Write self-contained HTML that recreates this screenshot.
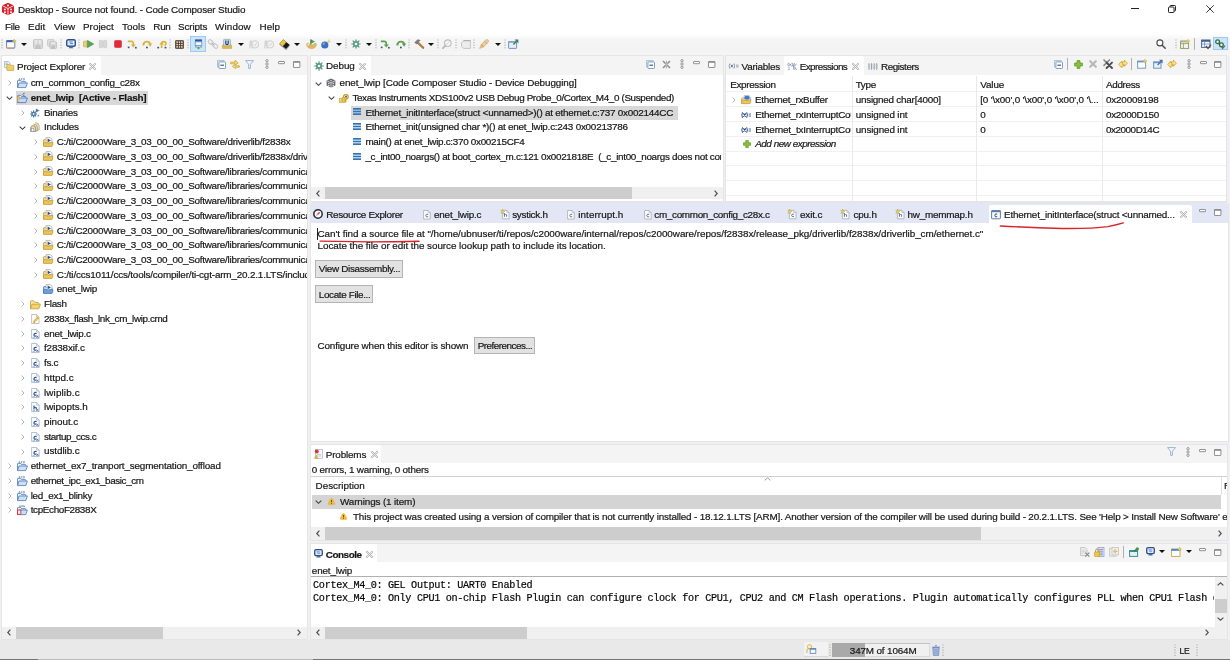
<!DOCTYPE html>
<html lang="en"><head><meta charset="utf-8"><title>Desktop - Source not found. - Code Composer Studio</title>
<style>
html,body{margin:0;padding:0}
body{width:1230px;height:660px;position:relative;overflow:hidden;background:#f3f3f3;
font-family:"Liberation Sans",sans-serif;font-size:9.9px;color:#151515;-webkit-text-stroke:0.2px #151515}
.b{position:absolute}
.i{position:absolute;overflow:visible}
.tl{position:absolute;left:0;top:0;width:1230px;height:660px;will-change:transform}
.t{position:absolute;white-space:pre;line-height:12px;height:12px}
</style></head>
<body>
<div class="b" style="left:0px;top:0px;width:1230px;height:19.5px;background:#fff;"></div>
<div class="b" style="left:0px;top:19.5px;width:1230px;height:15px;background:#fff;"></div>
<div class="b" style="left:0px;top:33.5px;width:1230px;height:21px;background:linear-gradient(#fff,#f5f5f5 25%,#f3f3f3 70%,#f6f6f6);"></div>
<div class="b" style="left:0px;top:53.5px;width:1230px;height:586px;background:#f0f0f3;"></div>
<div class="b" style="left:0px;top:53.5px;width:1230px;height:2px;background:#f5f5f5;"></div>
<div class="b" style="left:0px;top:639.5px;width:1230px;height:20.5px;background:#e9e9e9;"></div>
<div class="b" style="left:190px;top:36px;width:16px;height:16px;background:#cce4f7;box-shadow:inset 0 0 0 1px #9ccaf0"></div>
<div class="b" style="left:1213.4px;top:36.6px;width:14.2px;height:13.6px;background:#cce4f7;box-shadow:inset 0 0 0 1px #9ccaf0"></div>
<div class="b" style="left:2px;top:56px;width:304.5px;height:583px;background:#fff;box-shadow:0 0 0 1px #e5e5e5"></div>
<div class="b" style="left:2px;top:56px;width:304.5px;height:18.5px;background:#f4f4f4;"></div>
<div class="b" style="left:2px;top:56px;width:99px;height:19px;background:#fff;border-radius:2px 2px 0 0"></div>
<div class="b" style="left:16.4px;top:90.63px;width:131.2px;height:14.1px;background:#d8d8d8;"></div>
<div class="b" style="left:2px;top:626.7px;width:304.5px;height:12.3px;background:#f0f0f0;"></div>
<div class="b" style="left:16px;top:626.7px;width:146.6px;height:12.3px;background:#cdcdcd;"></div>
<div class="b" style="left:310.5px;top:56px;width:412.5px;height:144.7px;background:#fff;box-shadow:0 0 0 1px #e5e5e5"></div>
<div class="b" style="left:310.5px;top:56px;width:412.5px;height:18.5px;background:#f4f4f4;"></div>
<div class="b" style="left:310.5px;top:56px;width:60px;height:19px;background:#fff;border-radius:2px 2px 0 0"></div>
<div class="b" style="left:350.7px;top:105.56px;width:327px;height:14px;background:#d8d8d8;"></div>
<div class="b" style="left:310.5px;top:187px;width:412.5px;height:12.2px;background:#f0f0f0;"></div>
<div class="b" style="left:325px;top:187px;width:306.5px;height:12.2px;background:#cdcdcd;"></div>
<div class="b" style="left:726px;top:56px;width:500px;height:144.7px;background:#fff;box-shadow:0 0 0 1px #e5e5e5"></div>
<div class="b" style="left:726px;top:56px;width:500px;height:18.5px;background:#f4f4f4;"></div>
<div class="b" style="left:726px;top:56px;width:0px;height:19px;background:#fff;border-radius:2px 2px 0 0"></div>
<div class="b" style="left:783.6px;top:56px;width:80px;height:19px;background:#fff;border-radius:2px 2px 0 0"></div>
<div class="b" style="left:726px;top:91.2px;width:500px;height:1px;background:#f0f0f0;"></div>
<div class="b" style="left:726px;top:106.2px;width:500px;height:1px;background:#f0f0f0;"></div>
<div class="b" style="left:726px;top:121px;width:500px;height:1px;background:#f0f0f0;"></div>
<div class="b" style="left:726px;top:136px;width:500px;height:1px;background:#f0f0f0;"></div>
<div class="b" style="left:726px;top:150.8px;width:500px;height:1px;background:#f0f0f0;"></div>
<div class="b" style="left:726px;top:165.4px;width:500px;height:1px;background:#f0f0f0;"></div>
<div class="b" style="left:726px;top:180.2px;width:500px;height:1px;background:#f0f0f0;"></div>
<div class="b" style="left:726px;top:194.6px;width:500px;height:1px;background:#f0f0f0;"></div>
<div class="b" style="left:851.5px;top:75.5px;width:1px;height:125px;background:#e9e9e9;"></div>
<div class="b" style="left:976.4px;top:75.5px;width:1px;height:125px;background:#e9e9e9;"></div>
<div class="b" style="left:1101.7px;top:75.5px;width:1px;height:125px;background:#e9e9e9;"></div>
<div class="b" style="left:310.5px;top:203.4px;width:917.5px;height:237.4px;background:#fff;box-shadow:0 0 0 1px #e5e5e5;border-radius:3px 3px 0 0"></div>
<div class="b" style="left:310.5px;top:203.4px;width:917.5px;height:19.2px;background:#e2e6f5;border-radius:3px 3px 0 0"></div>
<div class="b" style="left:988.6px;top:204.6px;width:203.6px;height:18.3px;background:#fff;border-radius:2px 2px 0 0"></div>
<div class="b" style="left:317px;top:228px;width:1px;height:11.5px;background:#222;"></div>
<div class="b" style="left:315.1px;top:259.5px;width:88px;height:18px;background:#e2e2e2;box-shadow:inset 0 0 0 1px #b4b4b4"></div>
<div class="b" style="left:315.1px;top:285px;width:58px;height:17.8px;background:#e2e2e2;box-shadow:inset 0 0 0 1px #b4b4b4"></div>
<div class="b" style="left:474px;top:336.5px;width:60.7px;height:17.4px;background:#e2e2e2;box-shadow:inset 0 0 0 1px #b4b4b4"></div>
<div class="b" style="left:310.5px;top:444.5px;width:916.5px;height:95.5px;background:#fff;box-shadow:0 0 0 1px #e5e5e5"></div>
<div class="b" style="left:310.5px;top:444.5px;width:916.5px;height:18px;background:#f4f4f4;"></div>
<div class="b" style="left:310.5px;top:444.5px;width:70px;height:18.5px;background:#fff;border-radius:2px 2px 0 0"></div>
<div class="b" style="left:310.5px;top:476.3px;width:916.5px;height:1px;background:#d0d0d0;"></div>
<div class="b" style="left:1220.5px;top:477px;width:1px;height:17.5px;background:#e0e0e0;"></div>
<div class="b" style="left:312px;top:494.5px;width:908.5px;height:14px;background:#d4d4d4;"></div>
<div class="b" style="left:310.5px;top:526.5px;width:916.5px;height:13px;background:#f0f0f0;"></div>
<div class="b" style="left:325px;top:526.5px;width:655.5px;height:13px;background:#cdcdcd;"></div>
<div class="b" style="left:310.5px;top:544.3px;width:916.5px;height:94.7px;background:#fff;box-shadow:0 0 0 1px #e5e5e5"></div>
<div class="b" style="left:310.5px;top:544.3px;width:916.5px;height:18.1px;background:#f4f4f4;"></div>
<div class="b" style="left:310.5px;top:544.3px;width:66.7px;height:18.6px;background:#fff;border-radius:2px 2px 0 0"></div>
<div class="b" style="left:310.5px;top:575.7px;width:916.5px;height:1px;background:#b0b0b0;"></div>
<div class="b" style="left:1214.5px;top:577px;width:12.5px;height:49.7px;background:#f0f0f0;"></div>
<div class="b" style="left:1214.5px;top:599.4px;width:12.5px;height:13.2px;background:#cdcdcd;"></div>
<div class="b" style="left:310.5px;top:626.7px;width:904px;height:12.3px;background:#f0f0f0;"></div>
<div class="b" style="left:325px;top:626.7px;width:202.3px;height:12.3px;background:#cdcdcd;"></div>
<div class="b" style="left:1214.5px;top:626.7px;width:12.5px;height:12.3px;background:#f0f0f0;"></div>
<div class="b" style="left:803.5px;top:641.5px;width:24.5px;height:14.6px;background:#f2f2f2;box-shadow:0 1px 0 #d9d9d9"></div>
<div class="b" style="left:832px;top:642.6px;width:98.2px;height:14.2px;background:#f0f0f0;box-shadow:inset 0 1px 0 #c4c4c4, inset 0 0 0 1px #dadada"></div>
<div class="b" style="left:832px;top:642.6px;width:33.2px;height:14.2px;background:#a9a9a9;"></div>
<div class="b" style="left:0px;top:658.7px;width:1230px;height:1.3px;background:#bdbdbd;"></div>
<div class="b" style="left:0px;top:658.7px;width:38px;height:1.3px;background:#757575;"></div>
<div class="b" style="left:313px;top:658.7px;width:917px;height:1.3px;background:#757575;"></div>
<svg class="i" style="left:0.72px;top:2.02px" width="13.95" height="13.95" viewBox="0 0 15 15"><path d="M7.5 0.8 L14 3.8 V11 L7.5 14.2 L1 11 V3.8 Z" fill="#d8202a"/><path d="M1 3.8 L7.5 7 L14 3.8 M7.5 7 V14.2" stroke="#fff" stroke-width="0.9" fill="none"/><circle cx="4.2" cy="8" r="1" fill="#fff"/><circle cx="4.2" cy="11" r="1" fill="#fff"/><circle cx="10.8" cy="8" r="1" fill="#fff"/><circle cx="10.8" cy="11" r="1" fill="#fff"/><circle cx="7.5" cy="3.8" r="1" fill="#fff"/></svg>
<svg class="i" style="left:1130.70px;top:8.20px" width="8" height="1" viewBox="0 0 8 1"><path d="M0 0.5 H8" stroke="#222" stroke-width="1"/></svg>
<svg class="i" style="left:1167.70px;top:5.20px" width="8" height="8" viewBox="0 0 8 8"><rect x="0.5" y="2" width="5.5" height="5.5" rx="0.8" fill="none" stroke="#222" stroke-width="1"/><path d="M2 2 V1.2 Q2 0.5 2.8 0.5 H6.7 Q7.5 0.5 7.5 1.3 V5.2 Q7.5 6 6.7 6 H6" fill="none" stroke="#222" stroke-width="1"/></svg>
<svg class="i" style="left:1205.80px;top:5.20px" width="8" height="8" viewBox="0 0 8 8"><path d="M0.3 0.3 L7.7 7.7 M7.7 0.3 L0.3 7.7" stroke="#222" stroke-width="0.9"/></svg>
<svg class="i" style="left:1.00px;top:38.80px" width="2" height="10.4" viewBox="0 0 2 10.4"><path d="M1 0.4 V10.4" stroke="#a9a9a9" stroke-width="1.1" stroke-dasharray="1.1 1.5"/></svg>
<svg class="i" style="left:60.00px;top:38.80px" width="2" height="10.4" viewBox="0 0 2 10.4"><path d="M1 0.4 V10.4" stroke="#a9a9a9" stroke-width="1.1" stroke-dasharray="1.1 1.5"/></svg>
<svg class="i" style="left:78.00px;top:38.80px" width="2" height="10.4" viewBox="0 0 2 10.4"><path d="M1 0.4 V10.4" stroke="#a9a9a9" stroke-width="1.1" stroke-dasharray="1.1 1.5"/></svg>
<svg class="i" style="left:169.30px;top:38.80px" width="2" height="10.4" viewBox="0 0 2 10.4"><path d="M1 0.4 V10.4" stroke="#a9a9a9" stroke-width="1.1" stroke-dasharray="1.1 1.5"/></svg>
<svg class="i" style="left:187.00px;top:38.80px" width="2" height="10.4" viewBox="0 0 2 10.4"><path d="M1 0.4 V10.4" stroke="#a9a9a9" stroke-width="1.1" stroke-dasharray="1.1 1.5"/></svg>
<svg class="i" style="left:345.00px;top:38.80px" width="2" height="10.4" viewBox="0 0 2 10.4"><path d="M1 0.4 V10.4" stroke="#a9a9a9" stroke-width="1.1" stroke-dasharray="1.1 1.5"/></svg>
<svg class="i" style="left:375.00px;top:38.80px" width="2" height="10.4" viewBox="0 0 2 10.4"><path d="M1 0.4 V10.4" stroke="#a9a9a9" stroke-width="1.1" stroke-dasharray="1.1 1.5"/></svg>
<svg class="i" style="left:408.00px;top:38.80px" width="2" height="10.4" viewBox="0 0 2 10.4"><path d="M1 0.4 V10.4" stroke="#a9a9a9" stroke-width="1.1" stroke-dasharray="1.1 1.5"/></svg>
<svg class="i" style="left:437.00px;top:38.80px" width="2" height="10.4" viewBox="0 0 2 10.4"><path d="M1 0.4 V10.4" stroke="#a9a9a9" stroke-width="1.1" stroke-dasharray="1.1 1.5"/></svg>
<svg class="i" style="left:455.00px;top:38.80px" width="2" height="10.4" viewBox="0 0 2 10.4"><path d="M1 0.4 V10.4" stroke="#a9a9a9" stroke-width="1.1" stroke-dasharray="1.1 1.5"/></svg>
<svg class="i" style="left:473.00px;top:38.80px" width="2" height="10.4" viewBox="0 0 2 10.4"><path d="M1 0.4 V10.4" stroke="#a9a9a9" stroke-width="1.1" stroke-dasharray="1.1 1.5"/></svg>
<svg class="i" style="left:504.00px;top:38.80px" width="2" height="10.4" viewBox="0 0 2 10.4"><path d="M1 0.4 V10.4" stroke="#a9a9a9" stroke-width="1.1" stroke-dasharray="1.1 1.5"/></svg>
<svg class="i" style="left:1175.00px;top:38.80px" width="2" height="10.4" viewBox="0 0 2 10.4"><path d="M1 0.4 V10.4" stroke="#a9a9a9" stroke-width="1.1" stroke-dasharray="1.1 1.5"/></svg>
<svg class="i" style="left:21.00px;top:42.80px" width="6" height="3" viewBox="0 0 6 3"><path d="M0 0 H6 L3 3 Z" fill="#111"/></svg>
<svg class="i" style="left:237.70px;top:42.80px" width="6" height="3" viewBox="0 0 6 3"><path d="M0 0 H6 L3 3 Z" fill="#111"/></svg>
<svg class="i" style="left:294.00px;top:42.80px" width="6" height="3" viewBox="0 0 6 3"><path d="M0 0 H6 L3 3 Z" fill="#111"/></svg>
<svg class="i" style="left:336.00px;top:42.80px" width="6" height="3" viewBox="0 0 6 3"><path d="M0 0 H6 L3 3 Z" fill="#111"/></svg>
<svg class="i" style="left:366.00px;top:42.80px" width="6" height="3" viewBox="0 0 6 3"><path d="M0 0 H6 L3 3 Z" fill="#111"/></svg>
<svg class="i" style="left:428.00px;top:42.80px" width="6" height="3" viewBox="0 0 6 3"><path d="M0 0 H6 L3 3 Z" fill="#111"/></svg>
<svg class="i" style="left:494.50px;top:42.80px" width="6" height="3" viewBox="0 0 6 3"><path d="M0 0 H6 L3 3 Z" fill="#111"/></svg>
<svg class="i" style="left:6.00px;top:39.00px" width="10" height="10" viewBox="0 0 10 10"><rect x="0.6" y="1.8" width="8.2" height="7.4" rx="0.8" fill="#fdfdfd" stroke="#6a86b4" stroke-width="1"/><rect x="0.3" y="1.2" width="8.8" height="2" fill="#2f5fa8"/><path d="M0.6 8.9 H8.8" stroke="#c89a78" stroke-width="0.9"/><path d="M8.2 0 L8.9 1.4 L10.3 2 L8.9 2.7 L8.2 4.2 L7.5 2.7 L6.1 2 L7.5 1.4 Z" fill="#f0cf5a" stroke="#c9a23a" stroke-width="0.4"/></svg>
<svg class="i" style="left:32.60px;top:39.00px" width="10" height="10" viewBox="0 0 10 10"><rect x="0.5" y="0.5" width="9" height="9" rx="1" fill="#dcdcdc" stroke="#c6c6c6" stroke-width="1"/><rect x="2.4" y="0.8" width="5.2" height="3.6" fill="#ececec"/><rect x="2.4" y="6" width="5.2" height="3.4" fill="#c4c4c4"/><rect x="4.4" y="0.8" width="1.2" height="8.4" fill="#c9c9c9"/></svg>
<svg class="i" style="left:47.00px;top:39.00px" width="10" height="10" viewBox="0 0 10 10"><rect x="0.5" y="0.5" width="6.6" height="6.6" rx="1" fill="#dedede" stroke="#cacaca" stroke-width="0.9"/><rect x="2.8" y="2.8" width="6.8" height="6.8" rx="1" fill="#d8d8d8" stroke="#c2c2c2" stroke-width="0.9"/><rect x="4.4" y="6.4" width="3.6" height="3" fill="#c0c0c0"/><rect x="4.4" y="3.2" width="3.6" height="2" fill="#ebebeb"/></svg>
<svg class="i" style="left:65.50px;top:39.00px" width="10" height="10" viewBox="0 0 10 10"><rect x="0.7" y="0.7" width="8.6" height="6.6" rx="1.5" fill="#dfe9f6" stroke="#2f4f8c" stroke-width="1.4"/><path d="M3.2 3 H6.5 M4 4.6 H7" stroke="#4a7cc0" stroke-width="0.9"/><path d="M3.6 7.6 H6.4 L7.2 9.3 H2.8 Z" fill="#3f6db0"/></svg>
<svg class="i" style="left:82.70px;top:40.00px" width="11" height="8" viewBox="0 0 11 8"><rect x="0.5" y="1.2" width="3.6" height="5.6" rx="0.6" fill="#e6d47a" stroke="#cdb54c" stroke-width="0.9"/><path d="M4.4 0.3 L10.8 4 L4.4 7.7 Z" fill="#57a45c" stroke="#3f8a48" stroke-width="0.5"/></svg>
<svg class="i" style="left:99.00px;top:40.00px" width="8" height="8" viewBox="0 0 8 8"><rect x="0.4" y="0.4" width="3" height="7.2" rx="0.6" fill="#dadada" stroke="#c6c6c6" stroke-width="0.7"/><rect x="4.6" y="0.4" width="3" height="7.2" rx="0.6" fill="#dadada" stroke="#c6c6c6" stroke-width="0.7"/></svg>
<svg class="i" style="left:114.00px;top:40.00px" width="8" height="8" viewBox="0 0 8 8"><rect x="0.5" y="0.5" width="7" height="7" rx="1.1" fill="#e8283a" stroke="#d0505a" stroke-width="0.9"/></svg>
<svg class="i" style="left:127.00px;top:39.50px" width="10" height="9" viewBox="0 0 10 9"><path d="M0.8 1.4 H4.2 Q6.3 1.4 6.3 3.4 V5.2" fill="none" stroke="#d9b43f" stroke-width="1.7"/><path d="M3.8 4.4 H8.8 L6.3 7.6 Z" fill="#d9b43f"/><rect x="0.8" y="6.6" width="1.7" height="1.6" fill="#3d4f78"/><rect x="8" y="6.9" width="1.7" height="1.6" fill="#3d4f78"/></svg>
<svg class="i" style="left:142.00px;top:39.50px" width="10" height="9" viewBox="0 0 10 9"><path d="M1.4 5.6 Q1.4 1.6 5 1.6 Q8 1.6 8.2 4.2" fill="none" stroke="#d9b43f" stroke-width="1.7"/><path d="M5.8 3.6 H10.2 L8.2 6.8 Z" fill="#d9b43f"/><path d="M0 4.6 L1.4 2.6 L2.8 4.6 Z" fill="#d9b43f"/><rect x="4" y="6.7" width="1.8" height="1.6" fill="#3d4f78"/></svg>
<svg class="i" style="left:157.00px;top:39.50px" width="10" height="9" viewBox="0 0 10 9"><path d="M4.6 8 V4 Q4.6 1.6 6.8 1.6 Q9 1.6 9 3.6 Q9 5.2 7.4 5.4" fill="none" stroke="#d9b43f" stroke-width="1.7"/><path d="M2.4 4.6 L4.6 1.6 L6.8 4.6 Z" fill="#d9b43f"/><rect x="0.3" y="6.8" width="1.8" height="1.6" fill="#3d4f78"/><rect x="7.6" y="6.8" width="1.8" height="1.6" fill="#3d4f78"/></svg>
<svg class="i" style="left:175.00px;top:39.50px" width="9" height="9" viewBox="0 0 9 9"><rect x="0.2" y="0.2" width="8.6" height="8.6" rx="0.8" fill="#3b2a1c"/><g fill="#efe0c4"><rect x="1.3" y="1.3" width="1.6" height="1.6"/><rect x="3.7" y="1.3" width="1.6" height="1.6"/><rect x="6.1" y="1.3" width="1.6" height="1.6"/><rect x="1.3" y="3.7" width="1.6" height="1.6"/><rect x="3.7" y="3.7" width="1.6" height="1.6"/><rect x="6.1" y="3.7" width="1.6" height="1.6"/><rect x="1.3" y="6.1" width="1.6" height="1.6"/><rect x="3.7" y="6.1" width="1.6" height="1.6"/><rect x="6.1" y="6.1" width="1.6" height="1.6"/></g></svg>
<svg class="i" style="left:193.50px;top:38.50px" width="9" height="11" viewBox="0 0 9 11"><rect x="1" y="0.4" width="7" height="2.2" fill="#2f5a9c"/><rect x="1.2" y="2.8" width="6.6" height="3.6" fill="#f4f8fd" stroke="#5f8cc8" stroke-width="0.8"/><path d="M2 7 V8.8 M7 7 V8.8" stroke="#4f7fc0" stroke-width="1"/><rect x="3.1" y="7.4" width="2.8" height="2.8" rx="0.6" fill="#4f9a4a" stroke="#e8f0e0" stroke-width="0.5"/></svg>
<svg class="i" style="left:208.00px;top:39.00px" width="10" height="10" viewBox="0 0 10 10"><g transform="rotate(40 5 5)"><rect x="-0.6" y="3.2" width="5.2" height="3.6" rx="1.6" fill="#f0f0f0" stroke="#c4c4c4" stroke-width="1"/><rect x="5.4" y="3.2" width="5.2" height="3.6" rx="1.6" fill="#f0f0f0" stroke="#c4c4c4" stroke-width="1"/><path d="M3 5 H7" stroke="#b8b8b8" stroke-width="1"/></g></svg>
<svg class="i" style="left:222.00px;top:39.00px" width="10" height="10" viewBox="0 0 10 10"><rect x="1.6" y="0.4" width="6.8" height="6.6" rx="0.6" fill="#cfe0f2" stroke="#7f9fc8" stroke-width="0.7"/><path d="M3.8 1.6 V4.4 Q3.8 5.6 5 5.6 Q6.2 5.6 6.2 4.4 V1.6" fill="none" stroke="#2c3440" stroke-width="1.1"/><path d="M0.4 6.2 L1.8 5.4 V7.4 H8.2 V5.4 L9.6 6.2 V9.4 H0.4 Z" fill="#e2b84a" stroke="#c49a30" stroke-width="0.5"/></svg>
<svg class="i" style="left:248.50px;top:39.00px" width="10" height="10" viewBox="0 0 10 10"><circle cx="6" cy="5.4" r="3.7" fill="#f2f2f2" stroke="#cfcfcf" stroke-width="1"/><path d="M4.6 5.6 L5.8 6.8 L7.8 4" fill="none" stroke="#d0d0d0" stroke-width="0.9"/><path d="M0.6 2.4 Q2 0.2 3.4 2 L4 9.4 H2.6 L2.2 5 L1.2 9.4 H0.2 Z" fill="#d4d4d4"/></svg>
<svg class="i" style="left:263.50px;top:39.00px" width="10" height="10" viewBox="0 0 10 10"><circle cx="6" cy="5.4" r="3.7" fill="#f2f2f2" stroke="#cfcfcf" stroke-width="1"/><path d="M4.6 5.6 L5.8 6.8 L7.8 4" fill="none" stroke="#d0d0d0" stroke-width="0.9"/><path d="M0.6 2.4 Q2 0.2 3.4 2 L4 9.4 H2.6 L2.2 5 L1.2 9.4 H0.2 Z" fill="#d4d4d4"/></svg>
<svg class="i" style="left:278.80px;top:38.50px" width="11" height="11" viewBox="0 0 11 11"><path d="M4.2 0.6 L10.6 5.8 L7 10 L0.6 4.8 Z" fill="#17171a"/><path d="M4.2 0.6 L7.3 3.1 L3.7 7.3 L0.6 4.8 Z" fill="#e8c840"/><path d="M4.2 0.6 L7.3 3.1 L3.7 7.3 L0.6 4.8 Z" fill="none" stroke="#b8982c" stroke-width="0.5"/><path d="M0.6 4.8 L7 10 L7 10.9 L0.6 5.8 Z" fill="#8a8a8a"/><path d="M7 10 L10.6 5.8 V6.7 L7 10.9 Z" fill="#5a5a5a"/></svg>
<svg class="i" style="left:305.50px;top:39.00px" width="11" height="10" viewBox="0 0 11 10"><path d="M4.6 0.3 L9 2.6 L4.6 5 Z" fill="#4f9a4f"/><path d="M4.8 0.4 V6.6" stroke="#3f7f3f" stroke-width="0.9"/><path d="M0.5 5.2 Q1.2 3.6 2.8 4.2 L3.6 5.4 Q5.5 6.6 7.4 5.4 L8.4 4.2 Q10 3.8 10.5 5.2 Q9.8 9.6 5.5 9.6 Q1.2 9.6 0.5 5.2 Z" fill="#dcb868" stroke="#c09a48" stroke-width="0.5"/><circle cx="2.3" cy="5.4" r="1" fill="#f6edd2"/></svg>
<svg class="i" style="left:321.00px;top:39.00px" width="10" height="10" viewBox="0 0 10 10"><circle cx="3.8" cy="6" r="3.6" fill="#3c6fc2"/><circle cx="2.8" cy="4.8" r="1.3" fill="#79a4e2"/><path d="M7.8 0 L8.5 1.7 L10.2 2.4 L8.5 3.1 L7.8 4.8 L7.1 3.1 L5.4 2.4 L7.1 1.7 Z" fill="#ecd06a"/></svg>
<svg class="i" style="left:350.60px;top:39.00px" width="10" height="10" viewBox="0 0 10 10"><g stroke="#4f947a" stroke-width="1.2" fill="none"><path d="M5 0.4 V9.6 M0.4 5 H9.6 M1.7 1.7 L8.3 8.3 M8.3 1.7 L1.7 8.3"/></g><circle cx="5" cy="5" r="3" fill="#5a9f84"/><circle cx="5" cy="5" r="1.3" fill="#f4faf6"/></svg>
<svg class="i" style="left:380.30px;top:39.50px" width="10" height="9" viewBox="0 0 10 9"><path d="M0.8 1.4 H4.2 Q6.3 1.4 6.3 3.4 V5.2" fill="none" stroke="#5aa052" stroke-width="1.7"/><path d="M3.8 4.4 H8.8 L6.3 7.6 Z" fill="#5aa052"/><rect x="0.8" y="6.6" width="1.7" height="1.6" fill="#3d4f78"/><rect x="8" y="6.9" width="1.7" height="1.6" fill="#3d4f78"/></svg>
<svg class="i" style="left:395.50px;top:39.50px" width="10" height="9" viewBox="0 0 10 9"><path d="M1.4 5.6 Q1.4 1.6 5 1.6 Q8 1.6 8.2 4.2" fill="none" stroke="#5aa052" stroke-width="1.7"/><path d="M5.8 3.6 H10.2 L8.2 6.8 Z" fill="#5aa052"/><path d="M0 4.6 L1.4 2.6 L2.8 4.6 Z" fill="#5aa052"/><rect x="4" y="6.7" width="1.8" height="1.6" fill="#3d4f78"/></svg>
<svg class="i" style="left:413.50px;top:39.00px" width="10" height="10" viewBox="0 0 10 10"><path d="M3.6 3.4 L9.2 8.8" stroke="#a06a34" stroke-width="2.2" stroke-linecap="round"/><path d="M3.9 3.5 L9 8.4" stroke="#d49a5c" stroke-width="0.8" stroke-linecap="round"/><path d="M0.4 3.6 L3.4 0.6 Q5.6 0.2 6.6 1.8 L5.4 2.2 L2.6 5.6 Z" fill="#7c7c80"/></svg>
<svg class="i" style="left:442.30px;top:39.00px" width="10" height="10" viewBox="0 0 10 10"><circle cx="5.8" cy="4.2" r="3.3" fill="#f6f6f6" stroke="#bdbdbd" stroke-width="1.1"/><path d="M3.4 6.6 L0.8 9.2" stroke="#b4b4b4" stroke-width="1.6" stroke-linecap="round"/><path d="M4.2 5.6 L7.4 2.8" stroke="#cfcfcf" stroke-width="0.8"/></svg>
<svg class="i" style="left:460.60px;top:39.50px" width="10" height="9" viewBox="0 0 10 9"><path d="M2.6 0.6 H9.4 V8.4 H2.6 L0.5 6.2 V2.8 Z" fill="#ececec" stroke="#c4c4c4" stroke-width="1"/><path d="M2.6 0.6 H9.4" stroke="#b0b0b0" stroke-width="1.2"/></svg>
<svg class="i" style="left:479.00px;top:39.00px" width="10" height="10" viewBox="0 0 10 10"><path d="M0.6 9.4 L2.2 5.6 L6.4 1.2 Q8 0 9.2 1 Q10 2.2 8.8 3.8 L4.4 8 Z" fill="#e8cfa0" stroke="#c8a468" stroke-width="0.6"/><path d="M2.4 5.8 L4.4 7.8" stroke="#d8a848" stroke-width="1.4"/><path d="M5.6 2.4 L7.8 4.6" stroke="#d0a050" stroke-width="1"/></svg>
<svg class="i" style="left:507.80px;top:39.00px" width="11" height="10" viewBox="0 0 11 10"><rect x="0.6" y="2.6" width="8" height="6.8" rx="0.5" fill="#e6eef8" stroke="#6f94c4" stroke-width="1"/><rect x="0.3" y="2.2" width="8.6" height="1.6" fill="#7fa6d6"/><path d="M5.4 5.4 L8.6 2.2" stroke="#3f7f5a" stroke-width="1.4"/><path d="M6.6 0.6 H10.4 V4.4 Z" fill="#3f7f5a"/></svg>
<svg class="i" style="left:1155.50px;top:39.00px" width="10" height="10" viewBox="0 0 10 10"><circle cx="3.9" cy="3.9" r="3" fill="#fdfdfd" stroke="#4a4a4a" stroke-width="1.1"/><path d="M6.2 6.2 L9.2 9.2" stroke="#4a4a4a" stroke-width="1.5" stroke-linecap="round"/></svg>
<svg class="i" style="left:1179.60px;top:39.00px" width="10" height="10" viewBox="0 0 10 10"><rect x="0.6" y="2" width="8" height="7.4" fill="#f4f4ea" stroke="#8a9470" stroke-width="0.9"/><path d="M0.6 4.6 H8.6 M3.4 4.6 V9.4" stroke="#8a9470" stroke-width="0.8"/><rect x="0.6" y="2" width="8" height="1.4" fill="#a8b48a"/><path d="M8 0 L8.7 1.5 L10.2 2.1 L8.7 2.8 L8 4.3 L7.3 2.8 L5.8 2.1 L7.3 1.5 Z" fill="#ecd06a" stroke="#c8a840" stroke-width="0.3"/></svg>
<svg class="i" style="left:1200.50px;top:39.00px" width="10" height="10" viewBox="0 0 10 10"><rect x="0.6" y="1" width="8.4" height="7.4" fill="#f8fafd" stroke="#4a6490" stroke-width="1"/><rect x="0.6" y="1" width="8.4" height="1.8" fill="#3f5f98"/><path d="M0.6 5 H9 M3.6 2.8 V8.4" stroke="#6f8ab4" stroke-width="0.8"/><path d="M5 7 L7 9.4 L10 5.6" fill="none" stroke="#555" stroke-width="1.5"/></svg>
<svg class="i" style="left:1215.30px;top:39.00px" width="10" height="10" viewBox="0 0 10 10"><circle cx="2.6" cy="2.8" r="1.9" fill="#e8f2e8" stroke="#2f6f4a" stroke-width="1.3"/><circle cx="6.4" cy="5.8" r="1.9" fill="#e8f2e8" stroke="#2f6f4a" stroke-width="1.3"/><path d="M3.8 4 L5.2 4.8" stroke="#2f6f4a" stroke-width="1.2"/><path d="M6.2 7.4 L7.6 9.4 L10 6.6" fill="none" stroke="#666" stroke-width="1.3"/></svg>
<svg class="i" style="left:1193.80px;top:38.00px" width="1" height="12" viewBox="0 0 1 12"><path d="M0.5 0 V12" stroke="#b0b0b0" stroke-width="1"/></svg>
<svg class="i" style="left:3.80px;top:61.00px" width="10" height="10" viewBox="0 0 10 10"><path d="M0.5 0.5 H4.4 L6 2.1 V6.6 H0.5 Z" fill="#f6f9fd" stroke="#9ab0cc" stroke-width="0.8"/><path d="M1.4 2.2 H3.8 M1.4 3.6 H4.6" stroke="#6a8cc0" stroke-width="0.6"/><path d="M2.8 4.8 V3.9 Q2.8 3.4 3.3 3.4 H5.6 L6.4 4.3 H9.4 Q9.8 4.3 9.8 4.8 V9 Q9.8 9.5 9.3 9.5 H3.3 Q2.8 9.5 2.8 9 Z" fill="#efcf6c" stroke="#c9a23c" stroke-width="0.7"/></svg>
<svg class="i" style="left:89.10px;top:62.50px" width="7" height="7" viewBox="0 0 7 7"><path d="M1 1 L6 6 M6 1 L1 6" stroke="#adadad" stroke-width="1.8" fill="none" stroke-linecap="square"/><path d="M1 1 L6 6 M6 1 L1 6" stroke="#fdfdfd" stroke-width="0.75" fill="none" stroke-linecap="square"/></svg>
<svg class="i" style="left:216.70px;top:60.10px" width="9" height="9" viewBox="0 0 9 9"><rect x="0.5" y="0.5" width="6.4" height="6.4" fill="#e4edf6" stroke="#a9c0d8" stroke-width="0.9"/><rect x="1.9" y="1.9" width="6.6" height="6.6" rx="0.6" fill="#fbfdff" stroke="#7fa2c6" stroke-width="1"/><path d="M3.4 5.2 H7" stroke="#3c4f66" stroke-width="1.1"/></svg>
<svg class="i" style="left:230.00px;top:59.20px" width="10" height="10" viewBox="0 0 10 10"><g fill="#f4dc84" stroke="#d0a630" stroke-width="0.8"><path d="M0.6 3.2 H5 V1.2 L8.2 4 L5 6.2 V4.8 H0.6 Z"/><path d="M9.4 6.8 H5.6 V5 L2.4 7.4 L5.6 9.6 V8.2 H9.4 Z"/></g></svg>
<svg class="i" style="left:244.80px;top:59.80px" width="9" height="9" viewBox="0 0 9 9"><path d="M0.5 0.6 H8.5 L5.4 4.2 V8.4 H3.6 V4.2 Z" fill="#f4f8fc" stroke="#9bb4d2" stroke-width="1"/></svg>
<svg class="i" style="left:264.60px;top:59.40px" width="4" height="10" viewBox="0 0 4 10"><g fill="#fdfdfd" stroke="#7c7c7c" stroke-width="0.8"><circle cx="2" cy="1.7" r="1.15"/><circle cx="2" cy="5" r="1.15"/><circle cx="2" cy="8.3" r="1.15"/></g></svg>
<svg class="i" style="left:277.90px;top:60.90px" width="7" height="3.2" viewBox="0 0 7 3.2"><rect x="0.5" y="0.5" width="6" height="2.2" rx="0.4" fill="#fdfdfd" stroke="#858585" stroke-width="0.9"/></svg>
<svg class="i" style="left:292.70px;top:60.80px" width="7.4" height="7" viewBox="0 0 7.4 7"><rect x="0.5" y="0.7" width="6.4" height="5.8" rx="0.4" fill="#fdfdfd" stroke="#858585" stroke-width="0.9"/><path d="M0.3 1 H7.1" stroke="#858585" stroke-width="1.4"/></svg>
<svg class="i" style="left:7.70px;top:80.30px" width="3.6" height="6" viewBox="0 0 3.6 6"><path d="M0.6 0.5 L3 3 L0.6 5.5" fill="none" stroke="#acacac" stroke-width="0.95"/></svg>
<svg class="i" style="left:17.10px;top:78.30px" width="11" height="10" viewBox="0 0 11 10"><path transform="translate(0 0.8)" d="M0.5 8.6 V2.2 Q0.5 1.6 1.1 1.6 H3.6 L4.6 2.8 H8.2 Q8.8 2.8 8.8 3.4 V4.2" fill="#e9f1fb" stroke="#4a78b8" stroke-width="0.8"/><path transform="translate(0 0.8)" d="M0.5 8.8 L2 4.2 H10.4 L8.8 8.8 Z" fill="#cfe0f5" stroke="#4a78b8" stroke-width="0.8" stroke-linejoin="round"/><path d="M3.2 0.4 Q2 0.4 2 1.2 Q2 2 3.2 2 M5.4 0.4 Q4.2 0.4 4.2 1.2 Q4.2 2 5.4 2 M7.6 0.4 Q6.4 0.4 6.4 1 Q7.6 1.4 7.4 2 Q6.8 2.2 6.2 2" fill="none" stroke="#3f5f8f" stroke-width="0.6"/></svg>
<svg class="i" style="left:6.00px;top:96.33px" width="7" height="4" viewBox="0 0 7 4"><path d="M0.7 0.6 L3.5 3.3 L6.3 0.6" fill="none" stroke="#404040" stroke-width="1.1"/></svg>
<svg class="i" style="left:17.10px;top:93.03px" width="11" height="10" viewBox="0 0 11 10"><g transform="translate(0 0.8)"><path d="M0.5 8.6 V2.2 Q0.5 1.6 1.1 1.6 H3.6 L4.6 2.8 H8.2 Q8.8 2.8 8.8 3.4 V4.2" fill="#e9f1fb" stroke="#3f74c0" stroke-width="0.8"/><path d="M0.5 8.8 L2 4.2 H10.4 L8.8 8.8 Z" fill="#c4d9f4" stroke="#3f74c0" stroke-width="0.8" stroke-linejoin="round"/><path d="M0.4 8.8 V3 L2.6 1.8 V6 Z" fill="#f0a83c"/><path d="M0.8 5 L2.4 4 M0.8 7 L2.2 6" stroke="#fbe2a0" stroke-width="0.7"/></g><path d="M7.8 0.2 Q5.6 0.2 5.8 1.6 Q6 2.6 7.2 2.8 Q8.2 3.2 7.8 4" fill="none" stroke="#3f74c0" stroke-width="0.9"/></svg>
<svg class="i" style="left:20.90px;top:109.76px" width="3.6" height="6" viewBox="0 0 3.6 6"><path d="M0.6 0.5 L3 3 L0.6 5.5" fill="none" stroke="#acacac" stroke-width="0.95"/></svg>
<svg class="i" style="left:30.30px;top:107.76px" width="10" height="10" viewBox="0 0 10 10"><g stroke="#3f6f9a" stroke-width="1.2" fill="none"><path d="M3.6 2.4 V9.6 M0.2 6 H7 M1.2 3.6 L6 8.4 M6 3.6 L1.2 8.4"/></g><circle cx="3.6" cy="6" r="2.2" fill="#4a7fae"/><circle cx="3.6" cy="6" r="0.9" fill="#eef4fa"/><path d="M5.8 0.4 L9.6 2.4 L5.8 4.4 Z" fill="#4a78a8"/><rect x="7.6" y="6.8" width="1.6" height="1.6" fill="#6f94b8"/></svg>
<svg class="i" style="left:19.20px;top:125.79px" width="7" height="4" viewBox="0 0 7 4"><path d="M0.7 0.6 L3.5 3.3 L6.3 0.6" fill="none" stroke="#404040" stroke-width="1.1"/></svg>
<svg class="i" style="left:30.30px;top:122.49px" width="10" height="10" viewBox="0 0 10 10"><path d="M5.2 0.6 Q9.2 0.6 9.2 4 V8 H7.4" fill="#f1e7c8" stroke="#b8a87c" stroke-width="0.8"/><path d="M3.4 2 Q7.4 2 7.4 5.4 V9 H5.4" fill="#efe2b8" stroke="#a89868" stroke-width="0.8"/><path d="M0.6 9.4 V6.4 Q0.6 3.6 3.2 3.6 Q5.6 3.6 5.6 6.4 V9.4 Z" fill="#ecdcae" stroke="#8c8c84" stroke-width="0.9"/><rect x="1.6" y="6.6" width="2.2" height="2.8" fill="#fdfdfd" stroke="#8a8a8a" stroke-width="0.5"/></svg>
<svg class="i" style="left:33.70px;top:139.22px" width="3.6" height="6" viewBox="0 0 3.6 6"><path d="M0.6 0.5 L3 3 L0.6 5.5" fill="none" stroke="#acacac" stroke-width="0.95"/></svg>
<svg class="i" style="left:43.00px;top:136.52px" width="10.4" height="10" viewBox="0 0 10.4 10"><path d="M3 0.6 H7.4 L9 2.2 V6 H3 Z" fill="#fdfdfd" stroke="#a7a08c" stroke-width="0.7"/><path d="M4.6 1.6 L8 3.4 L4.6 5.2 Z" fill="#2f4f94"/><path d="M0.5 9 V3.2 Q0.5 2.6 1.1 2.6 H2.6 L3.4 3.6" fill="#f3dc8c" stroke="#c79a2e" stroke-width="0.8"/><path d="M0.5 9.4 Q0.3 6 1.6 5.4 Q5.4 7 9.8 5 Q10 8.6 9 9.4 Z" fill="#ecc658" stroke="#c79a2e" stroke-width="0.8" stroke-linejoin="round"/></svg>
<svg class="i" style="left:33.70px;top:153.95px" width="3.6" height="6" viewBox="0 0 3.6 6"><path d="M0.6 0.5 L3 3 L0.6 5.5" fill="none" stroke="#acacac" stroke-width="0.95"/></svg>
<svg class="i" style="left:43.00px;top:151.25px" width="10.4" height="10" viewBox="0 0 10.4 10"><path d="M3 0.6 H7.4 L9 2.2 V6 H3 Z" fill="#fdfdfd" stroke="#a7a08c" stroke-width="0.7"/><path d="M4.6 1.6 L8 3.4 L4.6 5.2 Z" fill="#2f4f94"/><path d="M0.5 9 V3.2 Q0.5 2.6 1.1 2.6 H2.6 L3.4 3.6" fill="#f3dc8c" stroke="#c79a2e" stroke-width="0.8"/><path d="M0.5 9.4 Q0.3 6 1.6 5.4 Q5.4 7 9.8 5 Q10 8.6 9 9.4 Z" fill="#ecc658" stroke="#c79a2e" stroke-width="0.8" stroke-linejoin="round"/></svg>
<svg class="i" style="left:33.70px;top:168.68px" width="3.6" height="6" viewBox="0 0 3.6 6"><path d="M0.6 0.5 L3 3 L0.6 5.5" fill="none" stroke="#acacac" stroke-width="0.95"/></svg>
<svg class="i" style="left:43.00px;top:165.98px" width="10.4" height="10" viewBox="0 0 10.4 10"><path d="M3 0.6 H7.4 L9 2.2 V6 H3 Z" fill="#fdfdfd" stroke="#a7a08c" stroke-width="0.7"/><path d="M4.6 1.6 L8 3.4 L4.6 5.2 Z" fill="#2f4f94"/><path d="M0.5 9 V3.2 Q0.5 2.6 1.1 2.6 H2.6 L3.4 3.6" fill="#f3dc8c" stroke="#c79a2e" stroke-width="0.8"/><path d="M0.5 9.4 Q0.3 6 1.6 5.4 Q5.4 7 9.8 5 Q10 8.6 9 9.4 Z" fill="#ecc658" stroke="#c79a2e" stroke-width="0.8" stroke-linejoin="round"/></svg>
<svg class="i" style="left:33.70px;top:183.41px" width="3.6" height="6" viewBox="0 0 3.6 6"><path d="M0.6 0.5 L3 3 L0.6 5.5" fill="none" stroke="#acacac" stroke-width="0.95"/></svg>
<svg class="i" style="left:43.00px;top:180.71px" width="10.4" height="10" viewBox="0 0 10.4 10"><path d="M3 0.6 H7.4 L9 2.2 V6 H3 Z" fill="#fdfdfd" stroke="#a7a08c" stroke-width="0.7"/><path d="M4.6 1.6 L8 3.4 L4.6 5.2 Z" fill="#2f4f94"/><path d="M0.5 9 V3.2 Q0.5 2.6 1.1 2.6 H2.6 L3.4 3.6" fill="#f3dc8c" stroke="#c79a2e" stroke-width="0.8"/><path d="M0.5 9.4 Q0.3 6 1.6 5.4 Q5.4 7 9.8 5 Q10 8.6 9 9.4 Z" fill="#ecc658" stroke="#c79a2e" stroke-width="0.8" stroke-linejoin="round"/></svg>
<svg class="i" style="left:33.70px;top:198.14px" width="3.6" height="6" viewBox="0 0 3.6 6"><path d="M0.6 0.5 L3 3 L0.6 5.5" fill="none" stroke="#acacac" stroke-width="0.95"/></svg>
<svg class="i" style="left:43.00px;top:195.44px" width="10.4" height="10" viewBox="0 0 10.4 10"><path d="M3 0.6 H7.4 L9 2.2 V6 H3 Z" fill="#fdfdfd" stroke="#a7a08c" stroke-width="0.7"/><path d="M4.6 1.6 L8 3.4 L4.6 5.2 Z" fill="#2f4f94"/><path d="M0.5 9 V3.2 Q0.5 2.6 1.1 2.6 H2.6 L3.4 3.6" fill="#f3dc8c" stroke="#c79a2e" stroke-width="0.8"/><path d="M0.5 9.4 Q0.3 6 1.6 5.4 Q5.4 7 9.8 5 Q10 8.6 9 9.4 Z" fill="#ecc658" stroke="#c79a2e" stroke-width="0.8" stroke-linejoin="round"/></svg>
<svg class="i" style="left:33.70px;top:212.87px" width="3.6" height="6" viewBox="0 0 3.6 6"><path d="M0.6 0.5 L3 3 L0.6 5.5" fill="none" stroke="#acacac" stroke-width="0.95"/></svg>
<svg class="i" style="left:43.00px;top:210.17px" width="10.4" height="10" viewBox="0 0 10.4 10"><path d="M3 0.6 H7.4 L9 2.2 V6 H3 Z" fill="#fdfdfd" stroke="#a7a08c" stroke-width="0.7"/><path d="M4.6 1.6 L8 3.4 L4.6 5.2 Z" fill="#2f4f94"/><path d="M0.5 9 V3.2 Q0.5 2.6 1.1 2.6 H2.6 L3.4 3.6" fill="#f3dc8c" stroke="#c79a2e" stroke-width="0.8"/><path d="M0.5 9.4 Q0.3 6 1.6 5.4 Q5.4 7 9.8 5 Q10 8.6 9 9.4 Z" fill="#ecc658" stroke="#c79a2e" stroke-width="0.8" stroke-linejoin="round"/></svg>
<svg class="i" style="left:33.70px;top:227.60px" width="3.6" height="6" viewBox="0 0 3.6 6"><path d="M0.6 0.5 L3 3 L0.6 5.5" fill="none" stroke="#acacac" stroke-width="0.95"/></svg>
<svg class="i" style="left:43.00px;top:224.90px" width="10.4" height="10" viewBox="0 0 10.4 10"><path d="M3 0.6 H7.4 L9 2.2 V6 H3 Z" fill="#fdfdfd" stroke="#a7a08c" stroke-width="0.7"/><path d="M4.6 1.6 L8 3.4 L4.6 5.2 Z" fill="#2f4f94"/><path d="M0.5 9 V3.2 Q0.5 2.6 1.1 2.6 H2.6 L3.4 3.6" fill="#f3dc8c" stroke="#c79a2e" stroke-width="0.8"/><path d="M0.5 9.4 Q0.3 6 1.6 5.4 Q5.4 7 9.8 5 Q10 8.6 9 9.4 Z" fill="#ecc658" stroke="#c79a2e" stroke-width="0.8" stroke-linejoin="round"/></svg>
<svg class="i" style="left:33.70px;top:242.33px" width="3.6" height="6" viewBox="0 0 3.6 6"><path d="M0.6 0.5 L3 3 L0.6 5.5" fill="none" stroke="#acacac" stroke-width="0.95"/></svg>
<svg class="i" style="left:43.00px;top:239.63px" width="10.4" height="10" viewBox="0 0 10.4 10"><path d="M3 0.6 H7.4 L9 2.2 V6 H3 Z" fill="#fdfdfd" stroke="#a7a08c" stroke-width="0.7"/><path d="M4.6 1.6 L8 3.4 L4.6 5.2 Z" fill="#2f4f94"/><path d="M0.5 9 V3.2 Q0.5 2.6 1.1 2.6 H2.6 L3.4 3.6" fill="#f3dc8c" stroke="#c79a2e" stroke-width="0.8"/><path d="M0.5 9.4 Q0.3 6 1.6 5.4 Q5.4 7 9.8 5 Q10 8.6 9 9.4 Z" fill="#ecc658" stroke="#c79a2e" stroke-width="0.8" stroke-linejoin="round"/></svg>
<svg class="i" style="left:33.70px;top:257.06px" width="3.6" height="6" viewBox="0 0 3.6 6"><path d="M0.6 0.5 L3 3 L0.6 5.5" fill="none" stroke="#acacac" stroke-width="0.95"/></svg>
<svg class="i" style="left:43.00px;top:254.36px" width="10.4" height="10" viewBox="0 0 10.4 10"><path d="M3 0.6 H7.4 L9 2.2 V6 H3 Z" fill="#fdfdfd" stroke="#a7a08c" stroke-width="0.7"/><path d="M4.6 1.6 L8 3.4 L4.6 5.2 Z" fill="#2f4f94"/><path d="M0.5 9 V3.2 Q0.5 2.6 1.1 2.6 H2.6 L3.4 3.6" fill="#f3dc8c" stroke="#c79a2e" stroke-width="0.8"/><path d="M0.5 9.4 Q0.3 6 1.6 5.4 Q5.4 7 9.8 5 Q10 8.6 9 9.4 Z" fill="#ecc658" stroke="#c79a2e" stroke-width="0.8" stroke-linejoin="round"/></svg>
<svg class="i" style="left:33.70px;top:271.79px" width="3.6" height="6" viewBox="0 0 3.6 6"><path d="M0.6 0.5 L3 3 L0.6 5.5" fill="none" stroke="#acacac" stroke-width="0.95"/></svg>
<svg class="i" style="left:43.00px;top:269.09px" width="10.4" height="10" viewBox="0 0 10.4 10"><path d="M3 0.6 H7.4 L9 2.2 V6 H3 Z" fill="#fdfdfd" stroke="#a7a08c" stroke-width="0.7"/><path d="M4.6 1.6 L8 3.4 L4.6 5.2 Z" fill="#2f4f94"/><path d="M0.5 9 V3.2 Q0.5 2.6 1.1 2.6 H2.6 L3.4 3.6" fill="#f3dc8c" stroke="#c79a2e" stroke-width="0.8"/><path d="M0.5 9.4 Q0.3 6 1.6 5.4 Q5.4 7 9.8 5 Q10 8.6 9 9.4 Z" fill="#ecc658" stroke="#c79a2e" stroke-width="0.8" stroke-linejoin="round"/></svg>
<svg class="i" style="left:43.00px;top:283.82px" width="10.4" height="10" viewBox="0 0 10.4 10"><path d="M3 0.6 H7.4 L9 2.2 V6 H3 Z" fill="#fdfdfd" stroke="#a7a08c" stroke-width="0.7"/><path d="M4.6 1.6 L8 3.4 L4.6 5.2 Z" fill="#2f4f94"/><path d="M0.5 9 V3.2 Q0.5 2.6 1.1 2.6 H2.6 L3.4 3.6" fill="#b8d0f0" stroke="#3f74c0" stroke-width="0.8"/><path d="M0.5 9.4 Q0.3 6 1.6 5.4 Q5.4 7 9.8 5 Q10 8.6 9 9.4 Z" fill="#6fa0e0" stroke="#3f74c0" stroke-width="0.8" stroke-linejoin="round"/></svg>
<svg class="i" style="left:20.90px;top:301.25px" width="3.6" height="6" viewBox="0 0 3.6 6"><path d="M0.6 0.5 L3 3 L0.6 5.5" fill="none" stroke="#acacac" stroke-width="0.95"/></svg>
<svg class="i" style="left:29.80px;top:299.75px" width="11" height="9" viewBox="0 0 11 9"><path d="M0.5 8.6 V1.4 Q0.5 0.8 1.1 0.8 H3.6 L4.6 2.4 H8.2 Q8.8 2.8 8.8 3.4 V4.2" fill="#f8e8a8" stroke="#c99a30" stroke-width="0.8"/><path d="M0.5 8.8 L2 4.2 H10.4 L8.8 8.8 Z" fill="#f2d46c" stroke="#c99a30" stroke-width="0.8" stroke-linejoin="round"/></svg>
<svg class="i" style="left:20.90px;top:315.98px" width="3.6" height="6" viewBox="0 0 3.6 6"><path d="M0.6 0.5 L3 3 L0.6 5.5" fill="none" stroke="#acacac" stroke-width="0.95"/></svg>
<svg class="i" style="left:30.80px;top:313.98px" width="9" height="10" viewBox="0 0 9 10"><path d="M0.6 0.5 H5.4 L8 3.1 V9.5 H0.6 Z" fill="#fdfdfd" stroke="#b4b4ac" stroke-width="0.8"/><path d="M5.4 0.5 V3.1 H8" fill="none" stroke="#b4b4ac" stroke-width="0.7"/><path d="M3.2 7.6 L7.6 3.2" stroke="#e2ae2c" stroke-width="2.1"/><path d="M2.2 9 L2.6 7 L4.2 8.4 Z" fill="#b8842c"/><path d="M3.6 7.2 L7.2 3.6" stroke="#f6d878" stroke-width="0.7"/></svg>
<svg class="i" style="left:20.90px;top:330.71px" width="3.6" height="6" viewBox="0 0 3.6 6"><path d="M0.6 0.5 L3 3 L0.6 5.5" fill="none" stroke="#acacac" stroke-width="0.95"/></svg>
<svg class="i" style="left:30.80px;top:328.71px" width="9" height="10" viewBox="0 0 9 10"><path d="M0.6 0.5 H5.6 L8.2 3.1 V9.5 H0.6 Z" fill="#fdfeff" stroke="#9fb2cc" stroke-width="0.8"/><path d="M5.6 0.5 V3.1 H8.2" fill="none" stroke="#9fb2cc" stroke-width="0.7"/><path d="M5.6 4.6 Q3.4 3.8 3 5.6 Q2.8 7.6 5.2 7.2" fill="none" stroke="#2f4f90" stroke-width="1.2"/><path d="M5 6.4 L7.6 9 M7.4 6.8 L5.4 8.8" stroke="#3f64a8" stroke-width="0.9"/><path d="M1.6 8.4 H4" stroke="#7fa0c8" stroke-width="0.7"/></svg>
<svg class="i" style="left:20.90px;top:345.44px" width="3.6" height="6" viewBox="0 0 3.6 6"><path d="M0.6 0.5 L3 3 L0.6 5.5" fill="none" stroke="#acacac" stroke-width="0.95"/></svg>
<svg class="i" style="left:30.80px;top:343.44px" width="9" height="10" viewBox="0 0 9 10"><path d="M0.6 0.5 H5.6 L8.2 3.1 V9.5 H0.6 Z" fill="#fdfeff" stroke="#9fb2cc" stroke-width="0.8"/><path d="M5.6 0.5 V3.1 H8.2" fill="none" stroke="#9fb2cc" stroke-width="0.7"/><path d="M5.6 4.6 Q3.4 3.8 3 5.6 Q2.8 7.6 5.2 7.2" fill="none" stroke="#2f4f90" stroke-width="1.2"/><path d="M5 6.4 L7.6 9 M7.4 6.8 L5.4 8.8" stroke="#3f64a8" stroke-width="0.9"/><path d="M1.6 8.4 H4" stroke="#7fa0c8" stroke-width="0.7"/></svg>
<svg class="i" style="left:20.90px;top:360.17px" width="3.6" height="6" viewBox="0 0 3.6 6"><path d="M0.6 0.5 L3 3 L0.6 5.5" fill="none" stroke="#acacac" stroke-width="0.95"/></svg>
<svg class="i" style="left:30.80px;top:358.17px" width="9" height="10" viewBox="0 0 9 10"><path d="M0.6 0.5 H5.6 L8.2 3.1 V9.5 H0.6 Z" fill="#fdfeff" stroke="#9fb2cc" stroke-width="0.8"/><path d="M5.6 0.5 V3.1 H8.2" fill="none" stroke="#9fb2cc" stroke-width="0.7"/><path d="M5.6 4.6 Q3.4 3.8 3 5.6 Q2.8 7.6 5.2 7.2" fill="none" stroke="#2f4f90" stroke-width="1.2"/><path d="M5 6.4 L7.6 9 M7.4 6.8 L5.4 8.8" stroke="#3f64a8" stroke-width="0.9"/><path d="M1.6 8.4 H4" stroke="#7fa0c8" stroke-width="0.7"/></svg>
<svg class="i" style="left:20.90px;top:374.90px" width="3.6" height="6" viewBox="0 0 3.6 6"><path d="M0.6 0.5 L3 3 L0.6 5.5" fill="none" stroke="#acacac" stroke-width="0.95"/></svg>
<svg class="i" style="left:30.80px;top:372.90px" width="9" height="10" viewBox="0 0 9 10"><path d="M0.6 0.5 H5.6 L8.2 3.1 V9.5 H0.6 Z" fill="#fdfeff" stroke="#9fb2cc" stroke-width="0.8"/><path d="M5.6 0.5 V3.1 H8.2" fill="none" stroke="#9fb2cc" stroke-width="0.7"/><path d="M5.6 4.6 Q3.4 3.8 3 5.6 Q2.8 7.6 5.2 7.2" fill="none" stroke="#2f4f90" stroke-width="1.2"/><path d="M5 6.4 L7.6 9 M7.4 6.8 L5.4 8.8" stroke="#3f64a8" stroke-width="0.9"/><path d="M1.6 8.4 H4" stroke="#7fa0c8" stroke-width="0.7"/></svg>
<svg class="i" style="left:20.90px;top:389.63px" width="3.6" height="6" viewBox="0 0 3.6 6"><path d="M0.6 0.5 L3 3 L0.6 5.5" fill="none" stroke="#acacac" stroke-width="0.95"/></svg>
<svg class="i" style="left:30.80px;top:387.63px" width="9" height="10" viewBox="0 0 9 10"><path d="M0.6 0.5 H5.6 L8.2 3.1 V9.5 H0.6 Z" fill="#fdfeff" stroke="#9fb2cc" stroke-width="0.8"/><path d="M5.6 0.5 V3.1 H8.2" fill="none" stroke="#9fb2cc" stroke-width="0.7"/><path d="M5.6 4.6 Q3.4 3.8 3 5.6 Q2.8 7.6 5.2 7.2" fill="none" stroke="#2f4f90" stroke-width="1.2"/><path d="M5 6.4 L7.6 9 M7.4 6.8 L5.4 8.8" stroke="#3f64a8" stroke-width="0.9"/><path d="M1.6 8.4 H4" stroke="#7fa0c8" stroke-width="0.7"/></svg>
<svg class="i" style="left:20.90px;top:404.36px" width="3.6" height="6" viewBox="0 0 3.6 6"><path d="M0.6 0.5 L3 3 L0.6 5.5" fill="none" stroke="#acacac" stroke-width="0.95"/></svg>
<svg class="i" style="left:30.80px;top:402.36px" width="9" height="10" viewBox="0 0 9 10"><path d="M0.6 0.5 H5.6 L8.2 3.1 V9.5 H0.6 Z" fill="#fdfeff" stroke="#9fb2cc" stroke-width="0.8"/><path d="M5.6 0.5 V3.1 H8.2" fill="none" stroke="#9fb2cc" stroke-width="0.7"/><path d="M3 3.6 V7.6 M3 5.8 Q4.2 4.8 5.2 5.6 V7.6" fill="none" stroke="#2f4f90" stroke-width="1.1"/><path d="M5 6.6 L7.6 9 M7.4 6.8 L5.4 8.8" stroke="#3f64a8" stroke-width="0.9"/><path d="M1.6 8.6 H4" stroke="#7fa0c8" stroke-width="0.7"/></svg>
<svg class="i" style="left:20.90px;top:419.09px" width="3.6" height="6" viewBox="0 0 3.6 6"><path d="M0.6 0.5 L3 3 L0.6 5.5" fill="none" stroke="#acacac" stroke-width="0.95"/></svg>
<svg class="i" style="left:30.80px;top:417.09px" width="9" height="10" viewBox="0 0 9 10"><path d="M0.6 0.5 H5.6 L8.2 3.1 V9.5 H0.6 Z" fill="#fdfeff" stroke="#9fb2cc" stroke-width="0.8"/><path d="M5.6 0.5 V3.1 H8.2" fill="none" stroke="#9fb2cc" stroke-width="0.7"/><path d="M5.6 4.6 Q3.4 3.8 3 5.6 Q2.8 7.6 5.2 7.2" fill="none" stroke="#2f4f90" stroke-width="1.2"/><path d="M5 6.4 L7.6 9 M7.4 6.8 L5.4 8.8" stroke="#3f64a8" stroke-width="0.9"/><path d="M1.6 8.4 H4" stroke="#7fa0c8" stroke-width="0.7"/></svg>
<svg class="i" style="left:20.90px;top:433.82px" width="3.6" height="6" viewBox="0 0 3.6 6"><path d="M0.6 0.5 L3 3 L0.6 5.5" fill="none" stroke="#acacac" stroke-width="0.95"/></svg>
<svg class="i" style="left:30.80px;top:431.82px" width="9" height="10" viewBox="0 0 9 10"><path d="M0.6 0.5 H5.6 L8.2 3.1 V9.5 H0.6 Z" fill="#fdfeff" stroke="#9fb2cc" stroke-width="0.8"/><path d="M5.6 0.5 V3.1 H8.2" fill="none" stroke="#9fb2cc" stroke-width="0.7"/><path d="M5.6 4.6 Q3.4 3.8 3 5.6 Q2.8 7.6 5.2 7.2" fill="none" stroke="#2f4f90" stroke-width="1.2"/><path d="M5 6.4 L7.6 9 M7.4 6.8 L5.4 8.8" stroke="#3f64a8" stroke-width="0.9"/><path d="M1.6 8.4 H4" stroke="#7fa0c8" stroke-width="0.7"/></svg>
<svg class="i" style="left:20.90px;top:448.55px" width="3.6" height="6" viewBox="0 0 3.6 6"><path d="M0.6 0.5 L3 3 L0.6 5.5" fill="none" stroke="#acacac" stroke-width="0.95"/></svg>
<svg class="i" style="left:30.80px;top:446.55px" width="9" height="10" viewBox="0 0 9 10"><path d="M0.6 0.5 H5.6 L8.2 3.1 V9.5 H0.6 Z" fill="#fdfeff" stroke="#9fb2cc" stroke-width="0.8"/><path d="M5.6 0.5 V3.1 H8.2" fill="none" stroke="#9fb2cc" stroke-width="0.7"/><path d="M5.6 4.6 Q3.4 3.8 3 5.6 Q2.8 7.6 5.2 7.2" fill="none" stroke="#2f4f90" stroke-width="1.2"/><path d="M5 6.4 L7.6 9 M7.4 6.8 L5.4 8.8" stroke="#3f64a8" stroke-width="0.9"/><path d="M1.6 8.4 H4" stroke="#7fa0c8" stroke-width="0.7"/></svg>
<svg class="i" style="left:7.70px;top:463.28px" width="3.6" height="6" viewBox="0 0 3.6 6"><path d="M0.6 0.5 L3 3 L0.6 5.5" fill="none" stroke="#acacac" stroke-width="0.95"/></svg>
<svg class="i" style="left:17.10px;top:461.28px" width="11" height="10" viewBox="0 0 11 10"><path transform="translate(0 0.8)" d="M0.5 8.6 V2.2 Q0.5 1.6 1.1 1.6 H3.6 L4.6 2.8 H8.2 Q8.8 2.8 8.8 3.4 V4.2" fill="#e9f1fb" stroke="#4a78b8" stroke-width="0.8"/><path transform="translate(0 0.8)" d="M0.5 8.8 L2 4.2 H10.4 L8.8 8.8 Z" fill="#cfe0f5" stroke="#4a78b8" stroke-width="0.8" stroke-linejoin="round"/><path d="M3.2 0.4 Q2 0.4 2 1.2 Q2 2 3.2 2 M5.4 0.4 Q4.2 0.4 4.2 1.2 Q4.2 2 5.4 2 M7.6 0.4 Q6.4 0.4 6.4 1 Q7.6 1.4 7.4 2 Q6.8 2.2 6.2 2" fill="none" stroke="#3f5f8f" stroke-width="0.6"/></svg>
<svg class="i" style="left:7.70px;top:478.01px" width="3.6" height="6" viewBox="0 0 3.6 6"><path d="M0.6 0.5 L3 3 L0.6 5.5" fill="none" stroke="#acacac" stroke-width="0.95"/></svg>
<svg class="i" style="left:17.10px;top:476.01px" width="11" height="10" viewBox="0 0 11 10"><path transform="translate(0 0.8)" d="M0.5 8.6 V2.2 Q0.5 1.6 1.1 1.6 H3.6 L4.6 2.8 H8.2 Q8.8 2.8 8.8 3.4 V4.2" fill="#e9f1fb" stroke="#4a78b8" stroke-width="0.8"/><path transform="translate(0 0.8)" d="M0.5 8.8 L2 4.2 H10.4 L8.8 8.8 Z" fill="#cfe0f5" stroke="#4a78b8" stroke-width="0.8" stroke-linejoin="round"/><path d="M3.2 0.4 Q2 0.4 2 1.2 Q2 2 3.2 2 M5.4 0.4 Q4.2 0.4 4.2 1.2 Q4.2 2 5.4 2 M7.6 0.4 Q6.4 0.4 6.4 1 Q7.6 1.4 7.4 2 Q6.8 2.2 6.2 2" fill="none" stroke="#3f5f8f" stroke-width="0.6"/></svg>
<svg class="i" style="left:7.70px;top:492.74px" width="3.6" height="6" viewBox="0 0 3.6 6"><path d="M0.6 0.5 L3 3 L0.6 5.5" fill="none" stroke="#acacac" stroke-width="0.95"/></svg>
<svg class="i" style="left:17.10px;top:490.74px" width="11" height="10" viewBox="0 0 11 10"><path transform="translate(0 0.8)" d="M0.5 8.6 V2.2 Q0.5 1.6 1.1 1.6 H3.6 L4.6 2.8 H8.2 Q8.8 2.8 8.8 3.4 V4.2" fill="#e9f1fb" stroke="#4a78b8" stroke-width="0.8"/><path transform="translate(0 0.8)" d="M0.5 8.8 L2 4.2 H10.4 L8.8 8.8 Z" fill="#cfe0f5" stroke="#4a78b8" stroke-width="0.8" stroke-linejoin="round"/><path d="M3.2 0.4 Q2 0.4 2 1.2 Q2 2 3.2 2 M5.4 0.4 Q4.2 0.4 4.2 1.2 Q4.2 2 5.4 2 M7.6 0.4 Q6.4 0.4 6.4 1 Q7.6 1.4 7.4 2 Q6.8 2.2 6.2 2" fill="none" stroke="#3f5f8f" stroke-width="0.6"/></svg>
<svg class="i" style="left:7.70px;top:507.47px" width="3.6" height="6" viewBox="0 0 3.6 6"><path d="M0.6 0.5 L3 3 L0.6 5.5" fill="none" stroke="#acacac" stroke-width="0.95"/></svg>
<svg class="i" style="left:17.10px;top:505.47px" width="11" height="10" viewBox="0 0 11 10"><g transform="translate(0 0.8)"><path d="M0.5 8.6 V2.2 Q0.5 1.6 1.1 1.6 H3.6 L4.6 2.8 H8.2 Q8.8 2.8 8.8 3.4 V4.2" fill="#e9f1fb" stroke="#4a78b8" stroke-width="0.8"/><path d="M0.5 8.8 L2 4.2 H10.4 L8.8 8.8 Z" fill="#cfe0f5" stroke="#4a78b8" stroke-width="0.8" stroke-linejoin="round"/></g><path d="M2.2 0.5 L3.8 2.1 M3.8 0.5 L2.2 2.1 M4.8 0.4 V2.2 M4.8 1 Q5.6 0.2 6.2 1 V2.2 M6.2 1 Q7 0.2 7.6 1 V2.2" fill="none" stroke="#3f5f8f" stroke-width="0.55"/><rect x="0.5" y="5" width="3.4" height="4.4" fill="#fbe4e4" stroke="#e0343c" stroke-width="0.9"/></svg>
<svg class="i" style="left:7.00px;top:629.35px" width="4" height="7" viewBox="0 0 4 7"><path d="M3.4 0.6 L0.8 3.5 L3.4 6.4" fill="none" stroke="#505050" stroke-width="1.2"/></svg>
<svg class="i" style="left:297.00px;top:629.35px" width="4" height="7" viewBox="0 0 4 7"><path d="M0.6 0.6 L3.2 3.5 L0.6 6.4" fill="none" stroke="#505050" stroke-width="1.2"/></svg>
<svg class="i" style="left:314.00px;top:61.20px" width="10" height="10" viewBox="0 0 10 10"><g stroke="#4a8f78" stroke-width="1.1" fill="none"><path d="M5 0.3 V9.7 M0.3 5 H9.7 M1.6 1.6 L8.4 8.4 M8.4 1.6 L1.6 8.4"/></g><circle cx="5" cy="5" r="3" fill="#569a80"/><circle cx="5" cy="5" r="1.3" fill="#f4faf6"/></svg>
<svg class="i" style="left:359.00px;top:62.50px" width="7" height="7" viewBox="0 0 7 7"><path d="M1 1 L6 6 M6 1 L1 6" stroke="#adadad" stroke-width="1.8" fill="none" stroke-linecap="square"/><path d="M1 1 L6 6 M6 1 L1 6" stroke="#fdfdfd" stroke-width="0.75" fill="none" stroke-linecap="square"/></svg>
<svg class="i" style="left:646.00px;top:60.10px" width="9" height="9" viewBox="0 0 9 9"><rect x="0.5" y="0.5" width="6.4" height="6.4" fill="#e4edf6" stroke="#a9c0d8" stroke-width="0.9"/><rect x="1.9" y="1.9" width="6.6" height="6.6" rx="0.6" fill="#fbfdff" stroke="#7fa2c6" stroke-width="1"/><path d="M3.4 5.2 H7" stroke="#3c4f66" stroke-width="1.1"/></svg>
<svg class="i" style="left:661.80px;top:59.80px" width="9" height="9" viewBox="0 0 9 9"><path d="M1 1 L8 8 M8 1 L1 8" stroke="#8f8f8f" stroke-width="1.6"/><path d="M4.5 0.5 V3 M4.5 6 V8.5" stroke="#a8a8a8" stroke-width="0.9"/><circle cx="4.5" cy="4.5" r="1.4" fill="#bbb"/></svg>
<svg class="i" style="left:680.00px;top:59.40px" width="4" height="10" viewBox="0 0 4 10"><g fill="#fdfdfd" stroke="#7c7c7c" stroke-width="0.8"><circle cx="2" cy="1.7" r="1.15"/><circle cx="2" cy="5" r="1.15"/><circle cx="2" cy="8.3" r="1.15"/></g></svg>
<svg class="i" style="left:693.00px;top:60.90px" width="7" height="3.2" viewBox="0 0 7 3.2"><rect x="0.5" y="0.5" width="6" height="2.2" rx="0.4" fill="#fdfdfd" stroke="#858585" stroke-width="0.9"/></svg>
<svg class="i" style="left:707.80px;top:60.80px" width="7.4" height="7" viewBox="0 0 7.4 7"><rect x="0.5" y="0.7" width="6.4" height="5.8" rx="0.4" fill="#fdfdfd" stroke="#858585" stroke-width="0.9"/><path d="M0.3 1 H7.1" stroke="#858585" stroke-width="1.4"/></svg>
<svg class="i" style="left:314.80px;top:81.60px" width="7" height="4" viewBox="0 0 7 4"><path d="M0.7 0.6 L3.5 3.3 L6.3 0.6" fill="none" stroke="#404040" stroke-width="1.1"/></svg>
<svg class="i" style="left:325.50px;top:78.30px" width="10" height="10" viewBox="0 0 10 10"><path d="M5 0.5 L9.4 2.6 V7.4 L5 9.6 L0.6 7.4 V2.6 Z" fill="#6c6c70"/><path d="M0.6 2.6 L5 4.8 L9.4 2.6 M5 4.8 V9.6" stroke="#e8e8e8" stroke-width="0.7" fill="none"/><g fill="#f4f4f4"><circle cx="5" cy="2.6" r="0.7"/><circle cx="2.8" cy="5.4" r="0.7"/><circle cx="2.8" cy="7.4" r="0.7"/><circle cx="7.2" cy="5.4" r="0.7"/><circle cx="7.2" cy="7.4" r="0.7"/></g></svg>
<svg class="i" style="left:327.80px;top:96.33px" width="7" height="4" viewBox="0 0 7 4"><path d="M0.7 0.6 L3.5 3.3 L6.3 0.6" fill="none" stroke="#404040" stroke-width="1.1"/></svg>
<svg class="i" style="left:338.70px;top:93.53px" width="10" height="9" viewBox="0 0 10 9"><rect x="0.5" y="4.6" width="2.4" height="3.8" fill="#f0d468" stroke="#c8a030" stroke-width="0.6"/><rect x="3.4" y="3.4" width="2.4" height="5" fill="#ecc850" stroke="#c8a030" stroke-width="0.6"/><path d="M4.6 3.4 Q4.2 0.6 6.8 0.6 Q9.4 0.6 9.2 3 Q9 5 6.8 5 L6.6 8.4" fill="none" stroke="#c49a28" stroke-width="1.3"/><circle cx="7" cy="2.8" r="1" fill="#6f5a20"/></svg>
<svg class="i" style="left:353.20px;top:108.36px" width="8" height="7" viewBox="0 0 8 7"><g fill="#2f74b6"><rect x="0" y="0" width="8" height="1.7"/><rect x="0" y="2.65" width="8" height="1.7"/><rect x="0" y="5.3" width="8" height="1.7"/></g></svg>
<svg class="i" style="left:353.20px;top:123.09px" width="8" height="7" viewBox="0 0 8 7"><g fill="#2f74b6"><rect x="0" y="0" width="8" height="1.7"/><rect x="0" y="2.65" width="8" height="1.7"/><rect x="0" y="5.3" width="8" height="1.7"/></g></svg>
<svg class="i" style="left:353.20px;top:137.82px" width="8" height="7" viewBox="0 0 8 7"><g fill="#2f74b6"><rect x="0" y="0" width="8" height="1.7"/><rect x="0" y="2.65" width="8" height="1.7"/><rect x="0" y="5.3" width="8" height="1.7"/></g></svg>
<svg class="i" style="left:353.20px;top:152.55px" width="8" height="7" viewBox="0 0 8 7"><g fill="#2f74b6"><rect x="0" y="0" width="8" height="1.7"/><rect x="0" y="2.65" width="8" height="1.7"/><rect x="0" y="5.3" width="8" height="1.7"/></g></svg>
<svg class="i" style="left:315.50px;top:189.60px" width="4" height="7" viewBox="0 0 4 7"><path d="M3.4 0.6 L0.8 3.5 L3.4 6.4" fill="none" stroke="#505050" stroke-width="1.2"/></svg>
<svg class="i" style="left:713.50px;top:189.60px" width="4" height="7" viewBox="0 0 4 7"><path d="M0.6 0.6 L3.2 3.5 L0.6 6.4" fill="none" stroke="#505050" stroke-width="1.2"/></svg>
<svg class="i" style="left:727.70px;top:63.30px" width="11" height="6" viewBox="0 0 11 6"><path d="M1.8 0.4 Q0.4 3 1.8 5.6 M6 0.4 Q7.4 3 6 5.6" fill="none" stroke="#7f8a98" stroke-width="0.8"/><path d="M2.8 1.6 L5 4.4 M5 1.6 L2.8 4.4" stroke="#4f6fa0" stroke-width="0.9"/><path d="M8 2.2 H10.6 M8 3.9 H10.6" stroke="#7f8a98" stroke-width="0.8"/></svg>
<svg class="i" style="left:786.50px;top:61.50px" width="10" height="9" viewBox="0 0 10 9"><path d="M1.6 0.8 Q0.2 2.6 1.6 4.6 M5 0.8 Q6.4 2.6 5 4.6" fill="none" stroke="#7f8a98" stroke-width="0.8"/><path d="M2.4 1.6 L4.2 3.8 M4.2 1.6 L2.4 3.8" stroke="#5f7fa8" stroke-width="0.8"/><path d="M7.4 1 Q5.6 4 7.2 8 M7 4.4 L9.6 2 M7.6 5 L9.6 8" fill="none" stroke="#6f88a8" stroke-width="0.9"/><path d="M0.8 6 H3 M0.8 7.6 H3" stroke="#8f9aa8" stroke-width="0.7"/></svg>
<svg class="i" style="left:851.50px;top:62.50px" width="7" height="7" viewBox="0 0 7 7"><path d="M1 1 L6 6 M6 1 L1 6" stroke="#adadad" stroke-width="1.8" fill="none" stroke-linecap="square"/><path d="M1 1 L6 6 M6 1 L1 6" stroke="#fdfdfd" stroke-width="0.75" fill="none" stroke-linecap="square"/></svg>
<svg class="i" style="left:867.80px;top:62.80px" width="10" height="7" viewBox="0 0 10 7"><g stroke="#8a8f98" stroke-width="1"><path d="M1 0.3 V6.7 M3.6 0.3 V6.7 M6.2 0.3 V6.7 M8.8 0.3 V6.7"/></g><g stroke="#c4c8d0" stroke-width="0.6"><path d="M0 2.2 H10 M0 4.6 H10"/></g></svg>
<svg class="i" style="left:1054.30px;top:59.80px" width="9" height="9" viewBox="0 0 9 9"><rect x="0.5" y="0.5" width="6.4" height="6.4" fill="#e4edf6" stroke="#a9c0d8" stroke-width="0.9"/><rect x="1.9" y="1.9" width="6.6" height="6.6" rx="0.6" fill="#fbfdff" stroke="#7fa2c6" stroke-width="1"/><path d="M3.4 5.2 H7" stroke="#3c4f66" stroke-width="1.1"/></svg>
<svg class="i" style="left:1067.10px;top:58.30px" width="1" height="12" viewBox="0 0 1 12"><path d="M0.5 0 V12" stroke="#b0b0b0" stroke-width="1"/></svg>
<svg class="i" style="left:1073.50px;top:59.80px" width="9" height="9" viewBox="0 0 9 9"><path d="M3.1 0.6 H5.9 V3.1 H8.4 V5.9 H5.9 V8.4 H3.1 V5.9 H0.6 V3.1 H3.1 Z" fill="#86c13c" stroke="#5f9a24" stroke-width="0.8" stroke-linejoin="round"/></svg>
<svg class="i" style="left:1089.40px;top:60.30px" width="8" height="8" viewBox="0 0 8 8"><path d="M1.2 1.2 L6.8 6.8 M6.8 1.2 L1.2 6.8" stroke="#b9b9b9" stroke-width="2.2" stroke-linecap="round"/></svg>
<svg class="i" style="left:1103.20px;top:59.30px" width="10" height="10" viewBox="0 0 10 10"><path d="M1 1 L6.4 6.4 M6.4 1 L1 6.4" stroke="#8c8c8c" stroke-width="1.7" stroke-linecap="round"/><path d="M3.6 3.6 L9 9 M9 3.6 L3.6 9" stroke="#4c4c4c" stroke-width="1.9" stroke-linecap="round"/></svg>
<svg class="i" style="left:1117.60px;top:59.30px" width="10" height="10" viewBox="0 0 10 10"><g fill="#f6e090" stroke="#d4a62c" stroke-width="0.8"><path d="M0.6 5.4 L3.8 2 V3.8 H6 V7 H3.8 V8.8 Z"/><path d="M9.4 4.2 L6.4 1 V2.8 H4.6 V5.6 H6.4 V7.4 Z"/></g></svg>
<svg class="i" style="left:1131.10px;top:58.30px" width="1" height="12" viewBox="0 0 1 12"><path d="M0.5 0 V12" stroke="#b0b0b0" stroke-width="1"/></svg>
<svg class="i" style="left:1137.00px;top:59.30px" width="10" height="10" viewBox="0 0 10 10"><rect x="0.6" y="2.2" width="8" height="7" fill="#fbfdff" stroke="#7c9cc4" stroke-width="1"/><rect x="0.3" y="1.8" width="8.6" height="1.6" fill="#6f94c8"/><path d="M8 0 l0.7 1.5 l1.5 0.6 l-1.5 0.7 l-0.7 1.5 l-0.7 -1.5 l-1.5 -0.7 l1.5 -0.6 Z" fill="#f0d060" stroke="#c8a63c" stroke-width="0.35"/></svg>
<svg class="i" style="left:1152.80px;top:59.30px" width="10" height="10" viewBox="0 0 10 10"><rect x="0.6" y="3" width="7.4" height="6.2" fill="#e8f0fa" stroke="#6f94c8" stroke-width="1"/><rect x="0.3" y="2.6" width="8" height="1.6" fill="#6f94c8"/><path d="M4.6 6 L8.4 2" stroke="#4a6fa8" stroke-width="1.3"/><path d="M6 0.8 H9.6 V4.4 Z" fill="#4a6fa8"/></svg>
<svg class="i" style="left:1167.00px;top:59.30px" width="10" height="10" viewBox="0 0 10 10"><g fill="#f6e090" stroke="#d4a62c" stroke-width="0.8"><path d="M0.6 5.4 L3.8 2 V3.8 H6 V7 H3.8 V8.8 Z"/><path d="M9.4 4.2 L6.4 1 V2.8 H4.6 V5.6 H6.4 V7.4 Z"/></g></svg>
<svg class="i" style="left:1186.80px;top:59.40px" width="4" height="10" viewBox="0 0 4 10"><g fill="#fdfdfd" stroke="#7c7c7c" stroke-width="0.8"><circle cx="2" cy="1.7" r="1.15"/><circle cx="2" cy="5" r="1.15"/><circle cx="2" cy="8.3" r="1.15"/></g></svg>
<svg class="i" style="left:1199.90px;top:60.90px" width="7" height="3.2" viewBox="0 0 7 3.2"><rect x="0.5" y="0.5" width="6" height="2.2" rx="0.4" fill="#fdfdfd" stroke="#858585" stroke-width="0.9"/></svg>
<svg class="i" style="left:1214.30px;top:60.80px" width="7.4" height="7" viewBox="0 0 7.4 7"><rect x="0.5" y="0.7" width="6.4" height="5.8" rx="0.4" fill="#fdfdfd" stroke="#858585" stroke-width="0.9"/><path d="M0.3 1 H7.1" stroke="#858585" stroke-width="1.4"/></svg>
<svg class="i" style="left:731.70px;top:96.70px" width="3.6" height="6" viewBox="0 0 3.6 6"><path d="M0.6 0.5 L3 3 L0.6 5.5" fill="none" stroke="#acacac" stroke-width="0.95"/></svg>
<svg class="i" style="left:740.60px;top:95.20px" width="10.4" height="9" viewBox="0 0 10.4 9"><path d="M3 0.5 H8 L9.6 2 V5 H3 Z" fill="#fdfdfd" stroke="#9aa8b8" stroke-width="0.6"/><ellipse cx="6" cy="2.8" rx="2.8" ry="2" fill="#3f78d0"/><path d="M0.5 8.2 V3.6 Q0.5 3 1.1 3 H2.6 L3.4 3.9" fill="#f3dc8c" stroke="#c79a2e" stroke-width="0.7"/><path d="M0.5 8.6 Q0.3 5.6 1.6 5 Q5.4 6.4 9.8 4.6 Q10 7.8 9 8.6 Z" fill="#ecc658" stroke="#c79a2e" stroke-width="0.8" stroke-linejoin="round"/></svg>
<svg class="i" style="left:740.80px;top:111.80px" width="10" height="6" viewBox="0 0 10 6"><path d="M1.6 0.3 Q0 3 1.6 5.7 M5.6 0.3 Q7.2 3 5.6 5.7" fill="none" stroke="#3f5f98" stroke-width="1.1"/><path d="M2.4 1.4 L4.8 4.6 M4.8 1.4 L2.4 4.6" stroke="#2a4680" stroke-width="1.1"/><path d="M7.6 2 H10 M7.6 4 H10" stroke="#4f70a8" stroke-width="1.1"/></svg>
<svg class="i" style="left:740.80px;top:126.70px" width="10" height="6" viewBox="0 0 10 6"><path d="M1.6 0.3 Q0 3 1.6 5.7 M5.6 0.3 Q7.2 3 5.6 5.7" fill="none" stroke="#3f5f98" stroke-width="1.1"/><path d="M2.4 1.4 L4.8 4.6 M4.8 1.4 L2.4 4.6" stroke="#2a4680" stroke-width="1.1"/><path d="M7.6 2 H10 M7.6 4 H10" stroke="#4f70a8" stroke-width="1.1"/></svg>
<svg class="i" style="left:742.95px;top:139.95px" width="8.1" height="8.1" viewBox="0 0 9 9"><path d="M3.1 0.6 H5.9 V3.1 H8.4 V5.9 H5.9 V8.4 H3.1 V5.9 H0.6 V3.1 H3.1 Z" fill="#86c13c" stroke="#5f9a24" stroke-width="0.8" stroke-linejoin="round"/></svg>
<svg class="i" style="left:313.30px;top:209.30px" width="10" height="10" viewBox="0 0 10 10"><circle cx="5" cy="5" r="4.2" fill="#fdfdfd" stroke="#2c2c36" stroke-width="1.5"/><path d="M7.4 2.6 L5.8 5.8 L4.2 4.2 Z" fill="#d8343c"/><path d="M2.6 7.4 L4.2 4.2 L5.8 5.8 Z" fill="#e8a0a4"/></svg>
<svg class="i" style="left:422.80px;top:209.55px" width="8" height="9.5" viewBox="0 0 8 9.5"><path d="M0.6 0.5 H5 L7.2 2.7 V9 H0.6 Z" fill="#fdfeff" stroke="#a4acb8" stroke-width="0.8"/><path d="M5 0.5 V2.7 H7.2" fill="none" stroke="#a4acb8" stroke-width="0.6"/><path d="M5.2 4.4 Q3.2 3.6 2.8 5.4 Q2.8 7.4 5.2 6.8" fill="none" stroke="#5a6478" stroke-width="0.9"/></svg>
<svg class="i" style="left:499.50px;top:209.30px" width="9.6" height="10" viewBox="0 0 9.6 10"><g transform="translate(1.8 0.8)"><path d="M0.6 0.5 H5 L7.2 2.7 V9 H0.6 Z" fill="#fdfeff" stroke="#a4acb8" stroke-width="0.8"/><path d="M5 0.5 V2.7 H7.2" fill="none" stroke="#a4acb8" stroke-width="0.6"/><path d="M2.6 3.2 V7 M2.6 5.2 Q3.8 4.2 4.8 5 V7" fill="none" stroke="#5a6478" stroke-width="0.9"/></g><path d="M2.6 0 l0.8 1.6 l1.7 0.5 l-1.5 1 l0.2 1.8 l-1.2 -1.2 l-1.7 0.6 l0.8 -1.6 l-1 -1.4 l1.6 0.2 Z" fill="#ecd060" stroke="#b89a34" stroke-width="0.4"/></svg>
<svg class="i" style="left:566.80px;top:209.55px" width="8" height="9.5" viewBox="0 0 8 9.5"><path d="M0.6 0.5 H5 L7.2 2.7 V9 H0.6 Z" fill="#fdfeff" stroke="#a4acb8" stroke-width="0.8"/><path d="M5 0.5 V2.7 H7.2" fill="none" stroke="#a4acb8" stroke-width="0.6"/><path d="M5.2 4.4 Q3.2 3.6 2.8 5.4 Q2.8 7.4 5.2 6.8" fill="none" stroke="#5a6478" stroke-width="0.9"/></svg>
<svg class="i" style="left:643.50px;top:209.55px" width="8" height="9.5" viewBox="0 0 8 9.5"><path d="M0.6 0.5 H5 L7.2 2.7 V9 H0.6 Z" fill="#fdfeff" stroke="#a4acb8" stroke-width="0.8"/><path d="M5 0.5 V2.7 H7.2" fill="none" stroke="#a4acb8" stroke-width="0.6"/><path d="M5.2 4.4 Q3.2 3.6 2.8 5.4 Q2.8 7.4 5.2 6.8" fill="none" stroke="#5a6478" stroke-width="0.9"/></svg>
<svg class="i" style="left:787.20px;top:209.30px" width="9.6" height="10" viewBox="0 0 9.6 10"><g transform="translate(1.8 0.8)"><path d="M0.6 0.5 H5 L7.2 2.7 V9 H0.6 Z" fill="#fdfeff" stroke="#a4acb8" stroke-width="0.8"/><path d="M5 0.5 V2.7 H7.2" fill="none" stroke="#a4acb8" stroke-width="0.6"/><path d="M5.2 4.4 Q3.2 3.6 2.8 5.4 Q2.8 7.4 5.2 6.8" fill="none" stroke="#5a6478" stroke-width="0.9"/></g><path d="M2.6 0 l0.8 1.6 l1.7 0.5 l-1.5 1 l0.2 1.8 l-1.2 -1.2 l-1.7 0.6 l0.8 -1.6 l-1 -1.4 l1.6 0.2 Z" fill="#ecd060" stroke="#b89a34" stroke-width="0.4"/></svg>
<svg class="i" style="left:840.20px;top:209.30px" width="9.6" height="10" viewBox="0 0 9.6 10"><g transform="translate(1.8 0.8)"><path d="M0.6 0.5 H5 L7.2 2.7 V9 H0.6 Z" fill="#fdfeff" stroke="#a4acb8" stroke-width="0.8"/><path d="M5 0.5 V2.7 H7.2" fill="none" stroke="#a4acb8" stroke-width="0.6"/><path d="M2.6 3.2 V7 M2.6 5.2 Q3.8 4.2 4.8 5 V7" fill="none" stroke="#5a6478" stroke-width="0.9"/></g><path d="M2.6 0 l0.8 1.6 l1.7 0.5 l-1.5 1 l0.2 1.8 l-1.2 -1.2 l-1.7 0.6 l0.8 -1.6 l-1 -1.4 l1.6 0.2 Z" fill="#ecd060" stroke="#b89a34" stroke-width="0.4"/></svg>
<svg class="i" style="left:894.70px;top:209.30px" width="9.6" height="10" viewBox="0 0 9.6 10"><g transform="translate(1.8 0.8)"><path d="M0.6 0.5 H5 L7.2 2.7 V9 H0.6 Z" fill="#fdfeff" stroke="#a4acb8" stroke-width="0.8"/><path d="M5 0.5 V2.7 H7.2" fill="none" stroke="#a4acb8" stroke-width="0.6"/><path d="M2.6 3.2 V7 M2.6 5.2 Q3.8 4.2 4.8 5 V7" fill="none" stroke="#5a6478" stroke-width="0.9"/></g><path d="M2.6 0 l0.8 1.6 l1.7 0.5 l-1.5 1 l0.2 1.8 l-1.2 -1.2 l-1.7 0.6 l0.8 -1.6 l-1 -1.4 l1.6 0.2 Z" fill="#ecd060" stroke="#b89a34" stroke-width="0.4"/></svg>
<svg class="i" style="left:991.30px;top:209.60px" width="10" height="9.4" viewBox="0 0 10 9.4"><rect x="0.6" y="0.6" width="8.8" height="8.2" rx="0.6" fill="#f7fafe" stroke="#5a7fae" stroke-width="1"/><rect x="0.4" y="0.4" width="9.2" height="1.8" fill="#5a7fae"/><path d="M6.2 4 Q4 3.4 3.8 5.4 Q3.8 7.4 6.2 6.8" fill="none" stroke="#3a4860" stroke-width="1"/></svg>
<svg class="i" style="left:1180.30px;top:210.80px" width="7" height="7" viewBox="0 0 7 7"><path d="M1 1 L6 6 M6 1 L1 6" stroke="#adadad" stroke-width="1.8" fill="none" stroke-linecap="square"/><path d="M1 1 L6 6 M6 1 L1 6" stroke="#fdfdfd" stroke-width="0.75" fill="none" stroke-linecap="square"/></svg>
<svg class="i" style="left:1198.90px;top:208.80px" width="7" height="3.2" viewBox="0 0 7 3.2"><rect x="0.5" y="0.5" width="6" height="2.2" rx="0.4" fill="#fdfdfd" stroke="#858585" stroke-width="0.9"/></svg>
<svg class="i" style="left:1213.60px;top:208.80px" width="7.4" height="7" viewBox="0 0 7.4 7"><rect x="0.5" y="0.7" width="6.4" height="5.8" rx="0.4" fill="#fdfdfd" stroke="#858585" stroke-width="0.9"/><path d="M0.3 1 H7.1" stroke="#858585" stroke-width="1.4"/></svg>
<svg class="i" style="left:313.50px;top:448.90px" width="9" height="10" viewBox="0 0 9 10"><rect x="1.4" y="0.6" width="7" height="8.8" fill="#fbfbfd" stroke="#a8b4c8" stroke-width="0.7"/><path d="M3 5.4 H7.2 M3 7 H7.2" stroke="#9aa8c0" stroke-width="0.6"/><circle cx="2.8" cy="2.6" r="2" fill="#d83a3a"/><path d="M0.4 9.4 L2.2 5.8 L4 9.4 Z" fill="#eab83c" stroke="#c8962c" stroke-width="0.4"/></svg>
<svg class="i" style="left:370.50px;top:451.10px" width="7" height="7" viewBox="0 0 7 7"><path d="M1 1 L6 6 M6 1 L1 6" stroke="#adadad" stroke-width="1.8" fill="none" stroke-linecap="square"/><path d="M1 1 L6 6 M6 1 L1 6" stroke="#fdfdfd" stroke-width="0.75" fill="none" stroke-linecap="square"/></svg>
<svg class="i" style="left:1166.50px;top:447.40px" width="9" height="9" viewBox="0 0 9 9"><path d="M0.5 0.6 H8.5 L5.4 4.2 V8.4 H3.6 V4.2 Z" fill="#f4f8fc" stroke="#9bb4d2" stroke-width="1"/></svg>
<svg class="i" style="left:1185.70px;top:446.90px" width="4" height="10" viewBox="0 0 4 10"><g fill="#fdfdfd" stroke="#7c7c7c" stroke-width="0.8"><circle cx="2" cy="1.7" r="1.15"/><circle cx="2" cy="5" r="1.15"/><circle cx="2" cy="8.3" r="1.15"/></g></svg>
<svg class="i" style="left:1198.80px;top:449.00px" width="7" height="3.2" viewBox="0 0 7 3.2"><rect x="0.5" y="0.5" width="6" height="2.2" rx="0.4" fill="#fdfdfd" stroke="#858585" stroke-width="0.9"/></svg>
<svg class="i" style="left:1213.70px;top:449.10px" width="7.4" height="7" viewBox="0 0 7.4 7"><rect x="0.5" y="0.7" width="6.4" height="5.8" rx="0.4" fill="#fdfdfd" stroke="#858585" stroke-width="0.9"/><path d="M0.3 1 H7.1" stroke="#858585" stroke-width="1.4"/></svg>
<svg class="i" style="left:763.50px;top:477.30px" width="7" height="4" viewBox="0 0 7 4"><path d="M0.6 3.4 L3.5 0.8 L6.4 3.4" fill="none" stroke="#9a9a9a" stroke-width="0.9"/></svg>
<svg class="i" style="left:315.00px;top:500.00px" width="7" height="4" viewBox="0 0 7 4"><path d="M0.7 0.6 L3.5 3.3 L6.3 0.6" fill="none" stroke="#404040" stroke-width="1.1"/></svg>
<svg class="i" style="left:327.70px;top:498.20px" width="7" height="7" viewBox="0 0 7 7"><path d="M3.5 0.4 Q4.2 0.4 4.6 1.1 L6.7 5.2 Q7 6.6 5.6 6.6 H1.4 Q0 6.6 0.3 5.2 L2.4 1.1 Q2.8 0.4 3.5 0.4 Z" fill="#f2bd34" stroke="#d89a20" stroke-width="0.4"/><path d="M3.5 2 V4.4" stroke="#6a4a10" stroke-width="0.9"/><circle cx="3.5" cy="5.5" r="0.5" fill="#6a4a10"/></svg>
<svg class="i" style="left:339.80px;top:513.20px" width="7" height="7" viewBox="0 0 7 7"><path d="M3.5 0.4 Q4.2 0.4 4.6 1.1 L6.7 5.2 Q7 6.6 5.6 6.6 H1.4 Q0 6.6 0.3 5.2 L2.4 1.1 Q2.8 0.4 3.5 0.4 Z" fill="#f2bd34" stroke="#d89a20" stroke-width="0.4"/><path d="M3.5 2 V4.4" stroke="#6a4a10" stroke-width="0.9"/><circle cx="3.5" cy="5.5" r="0.5" fill="#6a4a10"/></svg>
<svg class="i" style="left:315.50px;top:529.50px" width="4" height="7" viewBox="0 0 4 7"><path d="M3.4 0.6 L0.8 3.5 L3.4 6.4" fill="none" stroke="#505050" stroke-width="1.2"/></svg>
<svg class="i" style="left:1217.50px;top:529.50px" width="4" height="7" viewBox="0 0 4 7"><path d="M0.6 0.6 L3.2 3.5 L0.6 6.4" fill="none" stroke="#505050" stroke-width="1.2"/></svg>
<svg class="i" style="left:314.30px;top:548.90px" width="9" height="9" viewBox="0 0 9 9"><rect x="0.7" y="0.7" width="7.6" height="5.9" rx="1.3" fill="#dfe9f6" stroke="#2f4f8c" stroke-width="1.3"/><path d="M2.6 2.8 H5.6 M3.2 4.2 H6.2" stroke="#4a7cc0" stroke-width="0.8"/><path d="M3 6.9 H6 L6.8 8.5 H2.2 Z" fill="#3f6db0"/></svg>
<svg class="i" style="left:366.00px;top:550.50px" width="7" height="7" viewBox="0 0 7 7"><path d="M1 1 L6 6 M6 1 L1 6" stroke="#adadad" stroke-width="1.8" fill="none" stroke-linecap="square"/><path d="M1 1 L6 6 M6 1 L1 6" stroke="#fdfdfd" stroke-width="0.75" fill="none" stroke-linecap="square"/></svg>
<svg class="i" style="left:1080.00px;top:546.60px" width="10" height="10" viewBox="0 0 10 10"><path d="M0.6 0.5 H5 L7 2.5 V8.6 H0.6 Z" fill="#eeeeee" stroke="#bcbcbc" stroke-width="0.8"/><path d="M1.8 3 H5.6 M1.8 4.6 H5.6 M1.8 6.2 H4" stroke="#c8c8c8" stroke-width="0.7"/><path d="M5.2 5.6 L9.4 9.6 M9.4 5.6 L5.2 9.6" stroke="#8c8c8c" stroke-width="1.3"/></svg>
<svg class="i" style="left:1094.30px;top:546.60px" width="10.4" height="10" viewBox="0 0 10.4 10"><rect x="4" y="0.6" width="6" height="8.8" fill="#e8ecf8" stroke="#8a94c0" stroke-width="0.7"/><path d="M5 2.4 H9 M5 4.2 H9 M5 6 H9 M5 7.8 H9" stroke="#7078b0" stroke-width="0.8"/><path d="M1.6 5.4 V3.6 Q1.6 2 3 2 Q4.4 2 4.4 3.6 V5.4" fill="none" stroke="#b08c28" stroke-width="0.9"/><rect x="0.5" y="5" width="5" height="4.4" rx="0.5" fill="#f0c840" stroke="#c09828" stroke-width="0.6"/></svg>
<svg class="i" style="left:1109.00px;top:546.60px" width="10" height="10" viewBox="0 0 10 10"><rect x="0.6" y="1.2" width="6.4" height="8" fill="#ececec" stroke="#c4c4c4" stroke-width="0.8"/><rect x="3" y="0.5" width="6.4" height="7.4" fill="#f0f0f0" stroke="#c4c4c4" stroke-width="0.8"/><path d="M6.8 2.2 L4.8 4.4 L6.8 6.4 M5 4.4 H8.6" fill="none" stroke="#e0c060" stroke-width="1.2"/></svg>
<svg class="i" style="left:1122.90px;top:545.60px" width="1" height="12" viewBox="0 0 1 12"><path d="M0.5 0 V12" stroke="#b0b0b0" stroke-width="1"/></svg>
<svg class="i" style="left:1128.80px;top:546.60px" width="10.4" height="10" viewBox="0 0 10.4 10"><rect x="0.6" y="3.6" width="8" height="5.8" fill="#e4f2f4" stroke="#3f8a94" stroke-width="1"/><rect x="0.3" y="3.2" width="8.6" height="1.8" fill="#3f8a94"/><path d="M5 4.6 L8 1.8" stroke="#2f8a4a" stroke-width="1.8"/><circle cx="8.4" cy="1.8" r="1.6" fill="#3a9a52"/></svg>
<svg class="i" style="left:1145.50px;top:547.10px" width="9" height="9" viewBox="0 0 9 9"><rect x="0.7" y="0.7" width="7.6" height="5.9" rx="1.3" fill="#dfe9f6" stroke="#2f4f8c" stroke-width="1.3"/><path d="M2.6 2.8 H5.6 M3.2 4.2 H6.2" stroke="#4a7cc0" stroke-width="0.8"/><path d="M3 6.9 H6 L6.8 8.5 H2.2 Z" fill="#3f6db0"/></svg>
<svg class="i" style="left:1159.00px;top:550.40px" width="6" height="3" viewBox="0 0 6 3"><path d="M0 0 H6 L3 3 Z" fill="#111"/></svg>
<svg class="i" style="left:1170.50px;top:546.60px" width="11" height="10" viewBox="0 0 11 10"><rect x="0.6" y="2.2" width="8.4" height="7.2" fill="#fcfdff" stroke="#c8a44c" stroke-width="0.9"/><rect x="0.3" y="1.8" width="9" height="2" fill="#4f7fc4"/><path d="M8.6 0 l0.7 1.5 l1.5 0.6 l-1.5 0.7 l-0.7 1.5 l-0.7 -1.5 l-1.5 -0.7 l1.5 -0.6 Z" fill="#f0d060" stroke="#c8a63c" stroke-width="0.35"/></svg>
<svg class="i" style="left:1186.30px;top:550.40px" width="6" height="3" viewBox="0 0 6 3"><path d="M0 0 H6 L3 3 Z" fill="#111"/></svg>
<svg class="i" style="left:1198.80px;top:548.30px" width="7" height="3.2" viewBox="0 0 7 3.2"><rect x="0.5" y="0.5" width="6" height="2.2" rx="0.4" fill="#fdfdfd" stroke="#858585" stroke-width="0.9"/></svg>
<svg class="i" style="left:1213.60px;top:548.50px" width="7.4" height="7" viewBox="0 0 7.4 7"><rect x="0.5" y="0.7" width="6.4" height="5.8" rx="0.4" fill="#fdfdfd" stroke="#858585" stroke-width="0.9"/><path d="M0.3 1 H7.1" stroke="#858585" stroke-width="1.4"/></svg>
<svg class="i" style="left:1217.30px;top:582.00px" width="7" height="4" viewBox="0 0 7 4"><path d="M0.6 3.4 L3.5 0.8 L6.4 3.4" fill="none" stroke="#505050" stroke-width="1.2"/></svg>
<svg class="i" style="left:1217.30px;top:617.00px" width="7" height="4" viewBox="0 0 7 4"><path d="M0.6 0.6 L3.5 3.2 L6.4 0.6" fill="none" stroke="#505050" stroke-width="1.2"/></svg>
<svg class="i" style="left:315.50px;top:629.35px" width="4" height="7" viewBox="0 0 4 7"><path d="M3.4 0.6 L0.8 3.5 L3.4 6.4" fill="none" stroke="#505050" stroke-width="1.2"/></svg>
<svg class="i" style="left:1205.00px;top:629.35px" width="4" height="7" viewBox="0 0 4 7"><path d="M0.6 0.6 L3.2 3.5 L0.6 6.4" fill="none" stroke="#505050" stroke-width="1.2"/></svg>
<svg class="i" style="left:805.80px;top:644.20px" width="10.4" height="10" viewBox="0 0 10.4 10"><circle cx="3.6" cy="2.8" r="2.2" fill="#f8eeb8" stroke="#c8a83c" stroke-width="0.7"/><path d="M1 9 V5.8 Q1 4.8 2 4.8 H5.4" fill="none" stroke="#c8a83c" stroke-width="0.8"/><rect x="4.2" y="4.6" width="5.6" height="4.8" fill="#f4f8fd" stroke="#6f8cba" stroke-width="0.9"/><rect x="4" y="4.3" width="6" height="1.4" fill="#5f84b8"/></svg>
<svg class="i" style="left:828.60px;top:643.60px" width="2" height="13.4" viewBox="0 0 2 13.4"><path d="M1 0.4 V13.4" stroke="#a9a9a9" stroke-width="1.1" stroke-dasharray="1.1 1.5"/></svg>
<svg class="i" style="left:932.10px;top:644.70px" width="8" height="11" viewBox="0 0 8 11"><path d="M0.8 2.6 H7.2 L6.6 10.4 H1.4 Z" fill="#a9bce0" stroke="#6f88bc" stroke-width="0.8"/><path d="M0.3 2.2 H7.7 M3 0.8 H5" stroke="#6f88bc" stroke-width="1"/><path d="M2.8 4 V9 M4 4 V9 M5.2 4 V9" stroke="#7f98c8" stroke-width="0.6"/></svg>
<svg class="i" style="left:942.20px;top:643.60px" width="2" height="13.4" viewBox="0 0 2 13.4"><path d="M1 0.4 V13.4" stroke="#a9a9a9" stroke-width="1.1" stroke-dasharray="1.1 1.5"/></svg>
<svg class="i" style="left:1174.30px;top:643.60px" width="2" height="13.4" viewBox="0 0 2 13.4"><path d="M1 0.4 V13.4" stroke="#a9a9a9" stroke-width="1.1" stroke-dasharray="1.1 1.5"/></svg>
<svg class="i" style="left:1195.80px;top:643.60px" width="2" height="13.4" viewBox="0 0 2 13.4"><path d="M1 0.4 V13.4" stroke="#a9a9a9" stroke-width="1.1" stroke-dasharray="1.1 1.5"/></svg>
<svg class="i" style="left:0;top:0" width="1230" height="660" viewBox="0 0 1230 660"><path d="M320 241.1 Q345 241.4 370 241.9 Q395 241.8 419 241.2" fill="none" stroke="#d6242b" stroke-width="1.4" stroke-linecap="round"/><path d="M1000.3 226 Q1030 227.6 1062 228.5 Q1092 228.8 1108 226.6 Q1117 224.8 1123.3 222.9" fill="none" stroke="#d6242b" stroke-width="1.4" stroke-linecap="round"/></svg>
<div class="tl">
<span class="t" style="left:18px;top:3.50px;color:#222;letter-spacing:-0.143px;">Desktop - Source not found. - Code Composer Studio</span>
<span class="t" style="left:5px;top:20.50px;color:#1a1a1a;letter-spacing:-0.300px;">File</span>
<span class="t" style="left:28px;top:20.50px;color:#1a1a1a;letter-spacing:0.077px;">Edit</span>
<span class="t" style="left:54px;top:20.50px;color:#1a1a1a;letter-spacing:-0.038px;">View</span>
<span class="t" style="left:83px;top:20.50px;color:#1a1a1a;letter-spacing:0.010px;">Project</span>
<span class="t" style="left:122px;top:20.50px;color:#1a1a1a;letter-spacing:0.053px;">Tools</span>
<span class="t" style="left:153.3px;top:20.50px;color:#1a1a1a;letter-spacing:-0.300px;">Run</span>
<span class="t" style="left:178px;top:20.50px;color:#1a1a1a;letter-spacing:-0.137px;">Scripts</span>
<span class="t" style="left:215px;top:20.50px;color:#1a1a1a;letter-spacing:0.123px;">Window</span>
<span class="t" style="left:259.5px;top:20.50px;color:#1a1a1a;letter-spacing:0.100px;">Help</span>
<span class="t" style="left:17px;top:60.70px;letter-spacing:-0.126px;">Project Explorer</span>
<span class="t" style="left:30.7px;top:77.20px;letter-spacing:-0.274px;">cm_common_config_c28x</span>
<span class="t" style="left:30.7px;top:91.93px;font-weight:bold;letter-spacing:-0.207px;">enet_lwip  [Active - Flash]</span>
<span class="t" style="left:44px;top:106.66px;letter-spacing:-0.252px;">Binaries</span>
<span class="t" style="left:44px;top:121.39px;letter-spacing:-0.264px;">Includes</span>
<span class="t" style="left:56.7px;top:136.12px;letter-spacing:-0.261px;">C:/ti/C2000Ware_3_03_00_00_Software/driverlib/f2838x</span>
<span class="t" style="left:56.7px;top:150.85px;letter-spacing:-0.261px;width:250px;overflow:hidden;">C:/ti/C2000Ware_3_03_00_00_Software/driverlib/f2838x/driverlib_cm</span>
<span class="t" style="left:56.7px;top:165.58px;letter-spacing:-0.261px;width:250px;overflow:hidden;">C:/ti/C2000Ware_3_03_00_00_Software/libraries/communications/Ethernet/third_party/lwip/lwip-2.1.2/src/include</span>
<span class="t" style="left:56.7px;top:180.31px;letter-spacing:-0.261px;width:250px;overflow:hidden;">C:/ti/C2000Ware_3_03_00_00_Software/libraries/communications/Ethernet/third_party/lwip/lwip-2.1.2/ports/C2000/include</span>
<span class="t" style="left:56.7px;top:195.04px;letter-spacing:-0.261px;width:250px;overflow:hidden;">C:/ti/C2000Ware_3_03_00_00_Software/libraries/communications/Ethernet/third_party/lwip/lwip-2.1.2/apps</span>
<span class="t" style="left:56.7px;top:209.77px;letter-spacing:-0.261px;width:250px;overflow:hidden;">C:/ti/C2000Ware_3_03_00_00_Software/libraries/communications/Ethernet/third_party/lwip/lwip-2.1.2/src/apps</span>
<span class="t" style="left:56.7px;top:224.50px;letter-spacing:-0.261px;width:250px;overflow:hidden;">C:/ti/C2000Ware_3_03_00_00_Software/libraries/communications/Ethernet/third_party/lwip/lwip-2.1.2/src/apps/tftp</span>
<span class="t" style="left:56.7px;top:239.23px;letter-spacing:-0.261px;width:250px;overflow:hidden;">C:/ti/C2000Ware_3_03_00_00_Software/libraries/communications/Ethernet/third_party/lwip/examples/enet_lwip</span>
<span class="t" style="left:56.7px;top:253.96px;letter-spacing:-0.261px;width:250px;overflow:hidden;">C:/ti/C2000Ware_3_03_00_00_Software/libraries/communications/Ethernet/third_party/lwip/utils</span>
<span class="t" style="left:56.7px;top:268.69px;letter-spacing:-0.170px;width:250px;overflow:hidden;">C:/ti/ccs1011/ccs/tools/compiler/ti-cgt-arm_20.2.1.LTS/include</span>
<span class="t" style="left:56.7px;top:283.42px;letter-spacing:-0.133px;">enet_lwip</span>
<span class="t" style="left:44px;top:298.15px;letter-spacing:-0.300px;">Flash</span>
<span class="t" style="left:44px;top:312.88px;letter-spacing:-0.390px;">2838x_flash_lnk_cm_lwip.cmd</span>
<span class="t" style="left:44px;top:327.61px;letter-spacing:-0.248px;">enet_lwip.c</span>
<span class="t" style="left:44px;top:342.34px;letter-spacing:-0.156px;">f2838xif.c</span>
<span class="t" style="left:44px;top:357.07px;letter-spacing:-0.300px;">fs.c</span>
<span class="t" style="left:44px;top:371.80px;letter-spacing:0.022px;">httpd.c</span>
<span class="t" style="left:44px;top:386.53px;letter-spacing:0.132px;">lwiplib.c</span>
<span class="t" style="left:44px;top:401.26px;letter-spacing:-0.013px;">lwipopts.h</span>
<span class="t" style="left:44px;top:415.99px;letter-spacing:-0.053px;">pinout.c</span>
<span class="t" style="left:44px;top:430.72px;letter-spacing:-0.447px;">startup_ccs.c</span>
<span class="t" style="left:44px;top:445.45px;letter-spacing:-0.063px;">ustdlib.c</span>
<span class="t" style="left:30.7px;top:460.18px;letter-spacing:-0.164px;">ethernet_ex7_tranport_segmentation_offload</span>
<span class="t" style="left:30.7px;top:474.91px;letter-spacing:-0.403px;">ethernet_ipc_ex1_basic_cm</span>
<span class="t" style="left:30.7px;top:489.64px;letter-spacing:-0.277px;">led_ex1_blinky</span>
<span class="t" style="left:30.7px;top:504.37px;letter-spacing:-0.351px;">tcpEchoF2838X</span>
<span class="t" style="left:326px;top:60.40px;letter-spacing:-0.069px;">Debug</span>
<span class="t" style="left:339.5px;top:77.20px;letter-spacing:-0.095px;">enet_lwip [Code Composer Studio - Device Debugging]</span>
<span class="t" style="left:352.4px;top:91.93px;letter-spacing:-0.364px;">Texas Instruments XDS100v2 USB Debug Probe_0/Cortex_M4_0 (Suspended)</span>
<span class="t" style="left:365.4px;top:106.66px;letter-spacing:-0.228px;">Ethernet_initInterface(struct &lt;unnamed&gt;)() at ethernet.c:737 0x002144CC</span>
<span class="t" style="left:365.4px;top:121.39px;letter-spacing:-0.232px;">Ethernet_init(unsigned char *)() at enet_lwip.c:243 0x00213786</span>
<span class="t" style="left:365.4px;top:136.12px;letter-spacing:-0.294px;">main() at enet_lwip.c:370 0x00215CF4</span>
<span class="t" style="left:365.4px;top:150.85px;letter-spacing:-0.310px;width:356.1px;overflow:hidden;">_c_int00_noargs() at boot_cortex_m.c:121 0x0021818E  (_c_int00_noargs does not correspond to any source)</span>
<span class="t" style="left:741.6px;top:60.70px;letter-spacing:-0.240px;">Variables</span>
<span class="t" style="left:799.7px;top:60.70px;letter-spacing:-0.571px;">Expressions</span>
<span class="t" style="left:881px;top:60.70px;letter-spacing:-0.426px;">Registers</span>
<span class="t" style="left:730.3px;top:78.90px;letter-spacing:-0.354px;">Expression</span>
<span class="t" style="left:855.7px;top:78.90px;letter-spacing:-0.300px;">Type</span>
<span class="t" style="left:980.2px;top:78.90px;letter-spacing:-0.096px;">Value</span>
<span class="t" style="left:1106px;top:78.90px;letter-spacing:-0.344px;">Address</span>
<span class="t" style="left:755px;top:93.60px;letter-spacing:-0.268px;">Ethernet_rxBuffer</span>
<span class="t" style="left:855.7px;top:93.60px;letter-spacing:-0.238px;">unsigned char[4000]</span>
<span class="t" style="left:980.2px;top:93.60px;letter-spacing:-0.165px;">[0 '\x00',0 '\x00',0 '\x00',0 '\...</span>
<span class="t" style="left:1106px;top:93.60px;letter-spacing:-0.187px;">0x20009198</span>
<span class="t" style="left:755.2px;top:108.70px;letter-spacing:-0.244px;width:95.8px;overflow:hidden;">Ethernet_rxInterruptCount</span>
<span class="t" style="left:855.7px;top:108.70px;letter-spacing:-0.127px;">unsigned int</span>
<span class="t" style="left:980.2px;top:108.70px;letter-spacing:0.100px;">0</span>
<span class="t" style="left:1106px;top:108.70px;letter-spacing:-0.317px;">0x2000D150</span>
<span class="t" style="left:755.2px;top:123.60px;letter-spacing:-0.219px;width:95.8px;overflow:hidden;">Ethernet_txInterruptCount</span>
<span class="t" style="left:855.7px;top:123.60px;letter-spacing:-0.127px;">unsigned int</span>
<span class="t" style="left:980.2px;top:123.60px;letter-spacing:0.100px;">0</span>
<span class="t" style="left:1106px;top:123.60px;letter-spacing:-0.459px;">0x2000D14C</span>
<span class="t" style="left:755.2px;top:137.90px;font-style:italic;letter-spacing:-0.465px;">Add new expression</span>
<span class="t" style="left:326.2px;top:208.70px;letter-spacing:-0.302px;">Resource Explorer</span>
<span class="t" style="left:434px;top:208.70px;letter-spacing:-0.191px;">enet_lwip.c</span>
<span class="t" style="left:512.2px;top:208.70px;letter-spacing:-0.268px;">systick.h</span>
<span class="t" style="left:578.3px;top:208.70px;letter-spacing:0.060px;">interrupt.h</span>
<span class="t" style="left:654.3px;top:208.70px;letter-spacing:-0.307px;">cm_common_config_c28x.c</span>
<span class="t" style="left:800px;top:208.70px;letter-spacing:-0.139px;">exit.c</span>
<span class="t" style="left:853.5px;top:208.70px;letter-spacing:-0.194px;">cpu.h</span>
<span class="t" style="left:907.5px;top:208.70px;letter-spacing:-0.211px;">hw_memmap.h</span>
<span class="t" style="left:1004px;top:208.70px;letter-spacing:-0.208px;">Ethernet_initInterface(struct &lt;unnamed...</span>
<span class="t" style="left:317.5px;top:227.50px;letter-spacing:-0.044px;">Can't find a source file at "/home/ubnuser/ti/repos/c2000ware/internal/repos/c2000ware/repos/f2838x/release_pkg/driverlib/f2838x/driverlib_cm/ethernet.c"</span>
<span class="t" style="left:317.5px;top:240.40px;letter-spacing:-0.048px;">Locate the file or edit the source lookup path to include its location.</span>
<span class="t" style="left:318.8px;top:262.60px;letter-spacing:-0.316px;">View Disassembly...</span>
<span class="t" style="left:318.8px;top:288.70px;letter-spacing:-0.352px;">Locate File...</span>
<span class="t" style="left:317.5px;top:339.90px;letter-spacing:-0.145px;">Configure when this editor is shown</span>
<span class="t" style="left:477.7px;top:339.90px;letter-spacing:-0.495px;">Preferences...</span>
<span class="t" style="left:325.8px;top:448.60px;letter-spacing:-0.163px;">Problems</span>
<span class="t" style="left:311.8px;top:464.10px;letter-spacing:-0.228px;">0 errors, 1 warning, 0 others</span>
<span class="t" style="left:315.6px;top:480.20px;letter-spacing:-0.020px;">Description</span>
<span class="t" style="left:1224px;top:480.20px;letter-spacing:-0.195px;width:3px;overflow:hidden;">Resource</span>
<span class="t" style="left:340px;top:495.70px;letter-spacing:-0.131px;">Warnings (1 item)</span>
<span class="t" style="left:353px;top:510.70px;letter-spacing:-0.166px;width:874px;overflow:hidden;">This project was created using a version of compiler that is not currently installed - 18.12.1.LTS [ARM]. Another version of the compiler will be used during build - 20.2.1.LTS. See 'Help &gt; Install New Software' entry to install the missing compiler version.</span>
<span class="t" style="left:325.8px;top:548.50px;font-weight:bold;letter-spacing:-0.457px;">Console</span>
<span class="t" style="left:311.8px;top:564.60px;letter-spacing:-0.145px;">enet_lwip</span>
<span class="t" style="left:313.1px;top:580.10px;font-size:10.2px;font-family:'Liberation Mono',monospace;color:#000;letter-spacing:-0.347px;">Cortex_M4_0: GEL Output: UART0 Enabled</span>
<span class="t" style="left:313.1px;top:592.50px;font-size:10.2px;font-family:'Liberation Mono',monospace;color:#000;letter-spacing:-0.347px;width:901.4px;overflow:hidden;">Cortex_M4_0: Only CPU1 on-chip Flash Plugin can configure clock for CPU1, CPU2 and CM Flash operations. Plugin automatically configures PLL when CPU1 Flash operations are invoked</span>
<span class="t" style="left:849.8px;top:644.80px;letter-spacing:-0.146px;">347M of 1064M</span>
<span class="t" style="left:1179.6px;top:644.90px;font-size:8.6px;letter-spacing:-0.300px;">LE</span>
</div>
</body></html>
